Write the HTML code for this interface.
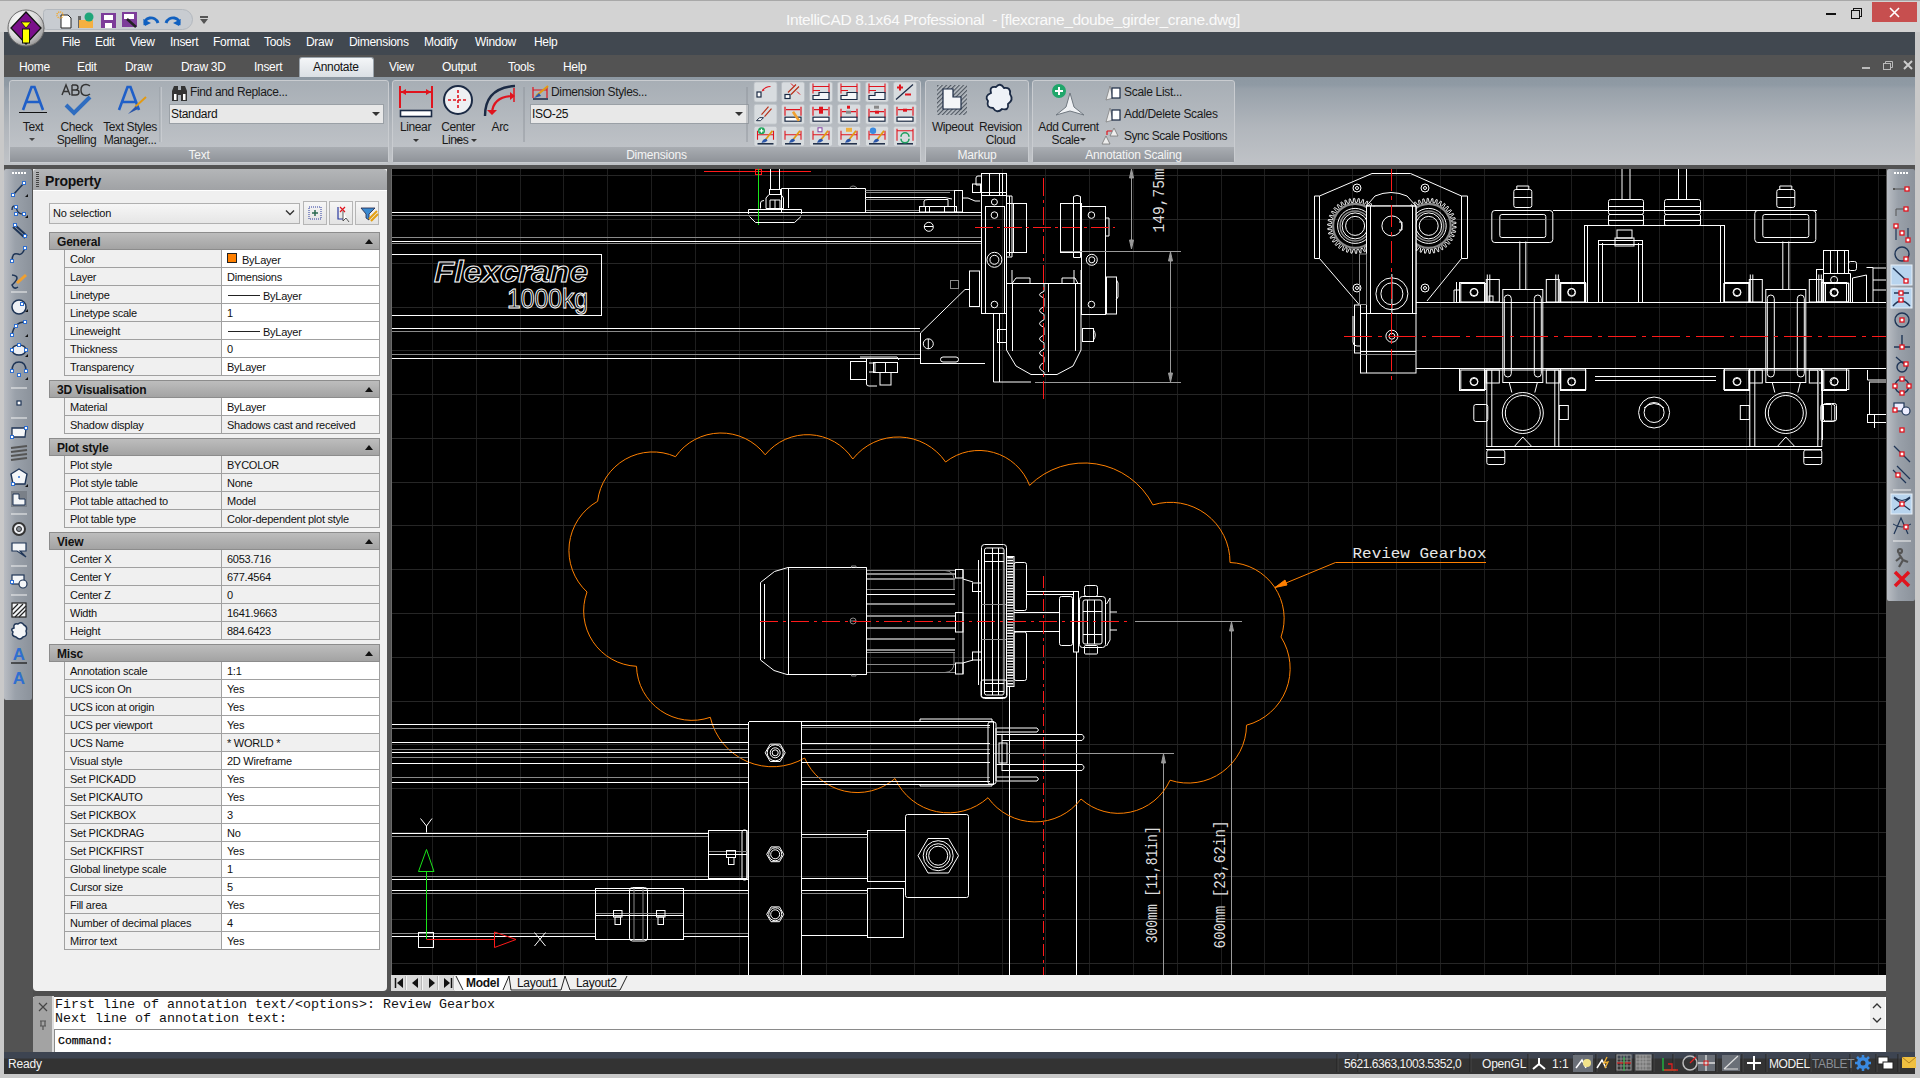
<!DOCTYPE html>
<html><head><meta charset="utf-8">
<style>
*{margin:0;padding:0;box-sizing:border-box}
html,body{width:1920px;height:1078px;overflow:hidden;background:#c9c9c9;font-family:"Liberation Sans",sans-serif;position:relative}
.a{position:absolute}
.t{position:absolute;white-space:pre;line-height:1}
#title{left:0;top:0;width:1920px;height:32px;background:#d3d3d3;border-top:1px solid #a8a8a8}
#menu{left:4px;top:32px;width:1911px;height:23px;background:#414850}
#menu .t{color:#fff;font-size:12px;top:4px;letter-spacing:-0.3px}
#tabs{left:4px;top:55px;width:1911px;height:22px;background:#535353}
#tabs .t{color:#fff;font-size:12px;top:6px;letter-spacing:-0.3px}
#ribbon{left:4px;top:77px;width:1911px;height:88px;background:linear-gradient(#8d98a2 0,#8f9aa4 8px,#98a1aa 12px,#b1b6bc 50px,#c0c3c7 88px)}
.panel{position:absolute;top:3px;height:83px;border:1px solid #c9ccd0;border-radius:3px;background:linear-gradient(#a7aeb5,#bcc0c5 60px,#c3c6ca)}
.plabel{position:absolute;left:0;right:0;bottom:0;height:15px;background:linear-gradient(#a9adb2,#8f9399);color:#f4f4f4;font-size:12px;text-align:center;line-height:17px;letter-spacing:-0.2px}
.rt{position:absolute;white-space:pre;font-size:12px;color:#1a1a1a;line-height:13px;text-align:center}
#main{left:4px;top:165px;width:1911px;height:887px;background:#535353}
#ltool{left:4px;top:169px;width:28px;height:531px;background:linear-gradient(90deg,#b9bdc3,#9aa1aa 40%,#8b929b);border-radius:2px}
#prop{left:33px;top:169px;width:354px;height:822px;background:#f0f0f0;border-radius:0 0 4px 4px}
#phead{left:33px;top:169px;width:354px;height:22px;background:linear-gradient(#b4b6b8,#9fa1a4);border-radius:4px 4px 0 0}
.sec{position:absolute;left:49px;width:331px;height:18px;background:linear-gradient(#bdbdbd,#a3a3a3);border:1px solid #8c8c8c;font-weight:bold;font-size:12px;color:#111}
.sec span{position:absolute;left:7px;top:2px;letter-spacing:-0.2px}
.sec i{position:absolute;right:6px;top:6px;width:0;height:0;border-left:4px solid transparent;border-right:4px solid transparent;border-bottom:5px solid #111}
.row{position:absolute;left:64px;width:316px;height:18px;border:1px solid #a0a0a0;border-top:none;font-size:11px;color:#111;letter-spacing:-0.25px}
.row .n{position:absolute;left:0;top:0;width:157px;height:17px;background:#f0f0f0;border-right:1px solid #a0a0a0}
.row .n span,.row .v span{position:absolute;left:5px;top:3px;white-space:pre}
.row .v{position:absolute;left:157px;top:0;width:157px;height:17px;background:#fff}
.row .v.g{background:#f0f0f0}
#draw{left:391px;top:169px;width:1495px;height:806px;background:#000;overflow:hidden}
#rtool{left:1887px;top:169px;width:28px;height:432px;background:linear-gradient(90deg,#b9bdc3,#9aa1aa 40%,#8b929b);border-radius:2px}
#ltabs{left:391px;top:975px;width:1495px;height:16px;background:#f0f0f0}
#cmd{left:33px;top:997px;width:1853px;height:55px;background:#fff}
#status{left:4px;top:1052px;width:1911px;height:22px;background:linear-gradient(#3d4451 0,#3d4451 6px,#333 7px,#333)}
</style></head><body>
<div id="title" class="a">

<div class="a" style="left:43px;top:8px;width:150px;height:21px;background:#c8ccd1;border:1px solid #b3b8be;border-radius:4px 12px 12px 4px"></div>
<svg class="a" style="left:55px;top:10px" width="135" height="18" viewBox="0 0 135 18">
<path d="M6 4 H13 L16 7 V17 H6 Z" fill="#fff" stroke="#222" stroke-width="1"/>
<circle cx="5" cy="4" r="3" fill="none" stroke="#f5a623" stroke-width="1.5" stroke-dasharray="1 1"/>
<rect x="23" y="5" width="3" height="12" fill="#666"/><path d="M24 9 H38 V17 H24 Z" fill="#f5b040"/>
<circle cx="34" cy="6" r="4.5" fill="#1fa67a"/>
<rect x="46" y="2" width="15" height="15" fill="#7d3d9a"/><rect x="49" y="4" width="9" height="5" fill="#fff"/><rect x="50" y="12" width="7" height="5" fill="#fff"/>
<rect x="67" y="1" width="15" height="15" fill="#7d3d9a"/><rect x="69" y="3" width="10" height="5" fill="#fff"/><path d="M72 8 L81 16" stroke="#222" stroke-width="2.5"/>
<path d="M90 14 C 88 6, 100 4, 103 12" fill="none" stroke="#1060c0" stroke-width="3"/><path d="M88 8 L90 15 L96 12 Z" fill="#1060c0"/>
<path d="M124 14 C 126 6, 114 4, 111 12" fill="none" stroke="#1060c0" stroke-width="3"/><path d="M126 8 L124 15 L118 12 Z" fill="#1060c0"/>
</svg>
<div class="a" style="left:200px;top:15px;width:8px;height:2px;background:#555"></div>
<div class="a" style="left:200px;top:18px;width:0;height:0;border-left:4px solid transparent;border-right:4px solid transparent;border-top:5px solid #555"></div>
<div class="t" style="left:786px;top:11px;font-size:15.5px;color:#fafafa;letter-spacing:-0.37px">IntelliCAD 8.1x64 Professional  - [flexcrane_doube_girder_crane.dwg]</div>
<div class="a" style="left:1826px;top:12px;width:10px;height:2px;background:#111"></div>
<div class="a" style="left:1853px;top:7px;width:9px;height:9px;border:1px solid #111"></div>
<div class="a" style="left:1851px;top:9px;width:9px;height:9px;border:1px solid #111;background:#d3d3d3"></div>
<div class="a" style="left:1872px;top:1px;width:45px;height:20px;background:#c74f4f"></div>
<svg class="a" style="left:1889px;top:6px" width="11" height="11"><path d="M1 1 L10 10 M10 1 L1 10" stroke="#fff" stroke-width="1.6"/></svg>
</div>
<div id="menu" class="a"><div class="t" style="left:58px">File</div><div class="t" style="left:91px">Edit</div><div class="t" style="left:126px">View</div><div class="t" style="left:166px">Insert</div><div class="t" style="left:209px">Format</div><div class="t" style="left:260px">Tools</div><div class="t" style="left:302px">Draw</div><div class="t" style="left:345px">Dimensions</div><div class="t" style="left:420px">Modify</div><div class="t" style="left:471px">Window</div><div class="t" style="left:530px">Help</div></div>
<div id="tabs" class="a"><div class="t" style="left:15px">Home</div><div class="t" style="left:73px">Edit</div><div class="t" style="left:121px">Draw</div><div class="t" style="left:177px">Draw 3D</div><div class="t" style="left:250px">Insert</div><div class="t" style="left:385px">View</div><div class="t" style="left:438px">Output</div><div class="t" style="left:504px">Tools</div><div class="t" style="left:559px">Help</div><div class="a" style="left:295px;top:2px;width:75px;height:21px;background:linear-gradient(#f4f6f8,#d9dee3);border:1px solid #9aa3ab;border-bottom:none;border-radius:3px 3px 0 0"></div><div class="t" style="left:309px;color:#111">Annotate</div><div class="a" style="left:1858px;top:12px;width:8px;height:2px;background:#bbb"></div><svg class="a" style="left:1879px;top:6px" width="10" height="9"><rect x="0.5" y="2.5" width="7" height="6" fill="none" stroke="#bbb"/><path d="M2.5 2.5 V0.5 H9.5 V6.5 H7.5" fill="none" stroke="#bbb"/></svg><svg class="a" style="left:1899px;top:5px" width="10" height="10"><path d="M1 1 L9 9 M9 1 L1 9" stroke="#ccc" stroke-width="2"/></svg></div>
<svg class="a" style="left:6px;top:8px;z-index:5" width="42" height="42" viewBox="0 0 42 42">
<defs><radialGradient id="lg" cx="0.35" cy="0.3" r="0.8"><stop offset="0" stop-color="#fff"/><stop offset="0.6" stop-color="#d8d8d8"/><stop offset="1" stop-color="#8a8a8a"/></radialGradient></defs>
<circle cx="20" cy="20" r="18" fill="url(#lg)" stroke="#6a6a6a" stroke-width="1"/>
<path d="M20 4 L35 20 L20 36 L5 20 Z" fill="#7a0f8a" stroke="#111" stroke-width="1.3"/>
<path d="M15 14 H25 L20 20 Z" fill="#ffff00" stroke="#111" stroke-width="0.8"/>
<rect x="16.5" y="21" width="7" height="14" fill="#ffff00" stroke="#111" stroke-width="1"/>
</svg>
<div id="ribbon" class="a"><div class="panel" style="left:5px;width:380px"><div class="plabel">Text</div></div>
<div class="panel" style="left:388px;width:529px"><div class="plabel">Dimensions</div></div>
<div class="panel" style="left:921px;width:104px"><div class="plabel">Markup</div></div>
<div class="panel" style="left:1028px;width:203px"><div class="plabel">Annotation Scaling</div></div>
<svg class="a" style="left:5px;top:5px" width="160" height="70" viewBox="9 82 160 70"><path d="M23 110 L31.5 87 L34.5 87 L43 110 M26 102 H40" fill="none" stroke="#1f5fc8" stroke-width="2.6"/><path d="M19 112.5 H47" stroke="#111" stroke-width="1"/><path d="M62 95 L66 85 L70 95 M63.5 91.5 H68.5 M72 85 V95 H76 Q79 95 79 92 Q79 90 76 90 H72 M72 90 H75.5 Q78 90 78 87.5 Q78 85 75.5 85 H72 M90 86 Q88 84.5 86 84.5 Q81 84.5 81 90 Q81 95.5 86 95.5 Q88 95.5 90 94" fill="none" stroke="#333" stroke-width="1.4"/><path d="M66 105 L74 113 L90 97" fill="none" stroke="#2f6dc0" stroke-width="4"/><path d="M119 110 L127.5 87 L130.5 87 L139 110 M122 102 H136" fill="none" stroke="#1f5fc8" stroke-width="2.6"/><path d="M135 107 L146 97" stroke="#e39a12" stroke-width="2"/><path d="M128 114 L136 106 L138 109 Z" fill="#2a55a8"/><path d="M161 87 V142" stroke="#d5d8dc" stroke-width="1"/><path d="M160 87 V142" stroke="#8a9097" stroke-width="0.6"/><path d="M29 138 h6 l-3 3 z" fill="#444"/></svg>
<div class="rt" style="left:-11px;top:44px;width:80px;line-height:13px;letter-spacing:-0.4px">Text</div>
<div class="rt" style="left:32.5px;top:44px;width:80px;line-height:13px;letter-spacing:-0.4px">Check<br>Spelling</div>
<div class="rt" style="left:86px;top:44px;width:80px;line-height:13px;letter-spacing:-0.4px">Text Styles<br>Manager...</div>
<svg class="a" style="left:167px;top:7px" width="18" height="18" viewBox="0 0 18 18"><path d="M1 17 V7 L3 2 H7 V17 Z M10 17 V2 H14 L16 7 V17 Z" fill="#333"/><rect x="7" y="6" width="3" height="5" fill="#333"/><rect x="3" y="10" width="2.5" height="6" fill="#fff"/><rect x="12" y="10" width="2.5" height="6" fill="#fff"/></svg>
<div class="rt" style="left:186px;top:9px;letter-spacing:-0.35px">Find and Replace...</div>
<div class="a" style="left:165px;top:27px;width:215px;height:20px;background:#e8e8e8;border:1px solid #9aa0a6"></div>
<div class="rt" style="left:167px;top:31px;letter-spacing:-0.3px;color:#111">Standard</div>
<div class="a" style="left:368px;top:35px;width:0;height:0;border-left:4px solid transparent;border-right:4px solid transparent;border-top:4px solid #333"></div>
<svg class="a" style="left:-4px;top:0px;z-index:1" width="1250" height="88" viewBox="0 77 1250 88"><path d="M400 86 V108 M432 86 V108 M401 92 H431" stroke="#e0141e" stroke-width="2" fill="none"/><path d="M401 92 l5 -3 v6 z M431 92 l-5 -3 v6 z" fill="#e0141e"/><rect x="400.5" y="110.5" width="31" height="6" fill="#fff" stroke="#1b2a44" stroke-width="1.6"/><path d="M413 139 h6 l-3 3 z" fill="#333"/><path d="M455 139 h6 l-3 3 z" fill="#333"/><path d="M471 139 h6 l-3 3 z" fill="#333"/><circle cx="458" cy="100" r="14" fill="#eef0f3" stroke="#1b2a44" stroke-width="2"/><path d="M448 100 H468 M458 90 V110" stroke="#e0141e" stroke-width="1.6" stroke-dasharray="3 2"/><path d="M485 116 Q485 88 515 86" fill="none" stroke="#1b2a44" stroke-width="2.4"/><path d="M492 113 Q493 97 512 96" fill="none" stroke="#e0141e" stroke-width="2.2"/><path d="M487 110 h10 l-5 5z M510 92 v8 l5 -4z" fill="#e0141e"/><path d="M514 88 V102" stroke="#e0141e" stroke-width="1.5"/><path d="M524 87 V142 M747 87 V142" stroke="#8a9097" stroke-width="0.8"/><path d="M533 87 V98 M547 87 V98 M533 90 H547" stroke="#e0141e" stroke-width="1.2" fill="none"/><path d="M533 99 H548" stroke="#1b2a44" stroke-width="1.5"/><path d="M536 96 L548 86" stroke="#e39a12" stroke-width="2"/><path d="M534 98 L539 93 L541 96Z" fill="#2a55a8"/><rect x="754.0" y="82.0" width="23" height="20" rx="2" fill="#d8dcdf" stroke="#b9bec3" stroke-width="0.8"/><rect x="754.0" y="104.2" width="23" height="20" rx="2" fill="#d8dcdf" stroke="#b9bec3" stroke-width="0.8"/><rect x="754.0" y="126.3" width="23" height="20" rx="2" fill="#d8dcdf" stroke="#b9bec3" stroke-width="0.8"/><rect x="781.5" y="82.0" width="23" height="20" rx="2" fill="#d8dcdf" stroke="#b9bec3" stroke-width="0.8"/><rect x="781.5" y="104.2" width="23" height="20" rx="2" fill="#d8dcdf" stroke="#b9bec3" stroke-width="0.8"/><rect x="781.5" y="126.3" width="23" height="20" rx="2" fill="#d8dcdf" stroke="#b9bec3" stroke-width="0.8"/><rect x="809.5" y="82.0" width="23" height="20" rx="2" fill="#d8dcdf" stroke="#b9bec3" stroke-width="0.8"/><rect x="809.5" y="104.2" width="23" height="20" rx="2" fill="#d8dcdf" stroke="#b9bec3" stroke-width="0.8"/><rect x="809.5" y="126.3" width="23" height="20" rx="2" fill="#d8dcdf" stroke="#b9bec3" stroke-width="0.8"/><rect x="837.5" y="82.0" width="23" height="20" rx="2" fill="#d8dcdf" stroke="#b9bec3" stroke-width="0.8"/><rect x="837.5" y="104.2" width="23" height="20" rx="2" fill="#d8dcdf" stroke="#b9bec3" stroke-width="0.8"/><rect x="837.5" y="126.3" width="23" height="20" rx="2" fill="#d8dcdf" stroke="#b9bec3" stroke-width="0.8"/><rect x="865.5" y="82.0" width="23" height="20" rx="2" fill="#d8dcdf" stroke="#b9bec3" stroke-width="0.8"/><rect x="865.5" y="104.2" width="23" height="20" rx="2" fill="#d8dcdf" stroke="#b9bec3" stroke-width="0.8"/><rect x="865.5" y="126.3" width="23" height="20" rx="2" fill="#d8dcdf" stroke="#b9bec3" stroke-width="0.8"/><rect x="893.5" y="82.0" width="23" height="20" rx="2" fill="#d8dcdf" stroke="#b9bec3" stroke-width="0.8"/><rect x="893.5" y="104.2" width="23" height="20" rx="2" fill="#d8dcdf" stroke="#b9bec3" stroke-width="0.8"/><rect x="893.5" y="126.3" width="23" height="20" rx="2" fill="#d8dcdf" stroke="#b9bec3" stroke-width="0.8"/><rect x="757.0" y="92.0" width="4" height="5" fill="#fff" stroke="#1b2a44" stroke-width="1.2"/><path d="M762.5 90.5 Q765.5 86.5 770.5 86.5" fill="none" stroke="#e0141e" stroke-width="1.2"/><path d="M761.5 91.5 l3 -1 l-1 -2z" fill="#e0141e"/><rect x="785" y="94.5" width="5" height="4" fill="#fff" stroke="#1b2a44" stroke-width="1.2"/><path d="M788 92.5 L796 84.5 M791 94.5 L799 86.5" stroke="#b83018" stroke-width="1.2"/><path d="M791 83.5 l3 3 M797 91.5 l3 3" stroke="#e0141e" stroke-width="1"/><path d="M813 83.5 V93.5 M829 83.5 V93.5 M813 86.5 H829 M813 90.5 H820" stroke="#e0141e" stroke-width="1.1" fill="none"/><path d="M813 99.5 V95.5 H819 V92.5 H829 V99.5 Z" fill="#f4f6f8" stroke="#1b2a44" stroke-width="1.2"/><path d="M841 83.5 V93.5 M857 83.5 V93.5 M841 86.5 H857 M841 90.5 H848" stroke="#e0141e" stroke-width="1.1" fill="none"/><path d="M841 99.5 V95.5 H847 V92.5 H857 V99.5 Z" fill="#f4f6f8" stroke="#1b2a44" stroke-width="1.2"/><path d="M869 83.5 V93.5 M885 83.5 V93.5 M869 86.5 H885 M869 90.5 H876" stroke="#e0141e" stroke-width="1.1" fill="none"/><path d="M869 99.5 V95.5 H875 V92.5 H885 V99.5 Z" fill="#f4f6f8" stroke="#1b2a44" stroke-width="1.2"/><path d="M896 99.5 L913 84.5" stroke="#1b2a44" stroke-width="1.2"/><path d="M897 87.5 h6 M900 84.5 v6 M905 94.5 h6" stroke="#e0141e" stroke-width="2"/><path d="M761.5 114.7 L768.5 106.7 M764.5 116.7 L771.5 108.7" stroke="#b83018" stroke-width="1.2"/><path d="M756.5 120.7 L759.5 117.7 H763.5 L760.5 120.7Z" fill="#fff" stroke="#1b2a44" stroke-width="1"/><path d="M785 106.7 V115.7 M801 106.7 V115.7 M786 109.7 H800" stroke="#e0141e" stroke-width="1.2" fill="none"/><rect x="785" y="117.2" width="16" height="4" fill="#fff" stroke="#1b2a44" stroke-width="1.2"/><path d="M793 111.7 L799 120.7" stroke="#f0a030" stroke-width="2.6"/><path d="M813 106.7 V115.7 M829 106.7 V115.7 M814 109.7 H828" stroke="#e0141e" stroke-width="1.2" fill="none"/><rect x="813" y="117.2" width="16" height="4" fill="#fff" stroke="#1b2a44" stroke-width="1.2"/><rect x="819" y="106.7" width="4" height="7" fill="#e0141e"/><path d="M841 108.7 V117.7 M857 108.7 V117.7 M842 111.7 H856" stroke="#e0141e" stroke-width="1.2" fill="none"/><rect x="841" y="117.2" width="16" height="4" fill="#fff" stroke="#1b2a44" stroke-width="1.2"/><rect x="847" y="105.7" width="3" height="3" fill="#e0141e"/><rect x="846" y="110.7" width="5" height="3" fill="#888"/><path d="M869 108.7 V117.7 M885 108.7 V117.7 M870 111.7 H884" stroke="#e0141e" stroke-width="1.2" fill="none"/><rect x="869" y="117.2" width="16" height="4" fill="#fff" stroke="#1b2a44" stroke-width="1.2"/><rect x="874" y="105.7" width="5" height="3" fill="#888"/><rect x="875" y="110.7" width="4" height="3" fill="#e0141e"/><path d="M897 106.7 V115.7 M913 106.7 V115.7 M898 109.7 H912" stroke="#e0141e" stroke-width="1.2" fill="none"/><rect x="897" y="117.2" width="16" height="4" fill="#fff" stroke="#1b2a44" stroke-width="1.2"/><rect x="903" y="108.7" width="4" height="3" fill="#e0141e"/><path d="M757.5 130.8 V139.8 M773.5 130.8 V139.8 M757.5 134.8 H773.5" stroke="#e0141e" stroke-width="1.1" fill="none"/><path d="M757.5 143.8 H773.5" stroke="#1b2a44" stroke-width="1.5"/><path d="M765.5 139.8 L772.5 130.8" stroke="#e39a12" stroke-width="1.8"/><path d="M761.5 142.8 Q763.5 137.8 766.5 138.8 L767.5 140.8 Q765.5 142.8 761.5 142.8Z" fill="#2a55a8"/><circle cx="761.5" cy="130.8" r="3.5" fill="#1fa65a"/><path d="M759.5 130.8 h4 M761.5 128.8 v4" stroke="#fff" stroke-width="1.2"/><path d="M785 130.8 V139.8 M801 130.8 V139.8 M785 134.8 H801" stroke="#e0141e" stroke-width="1.1" fill="none"/><path d="M785 143.8 H801" stroke="#1b2a44" stroke-width="1.5"/><path d="M793 139.8 L800 130.8" stroke="#e39a12" stroke-width="1.8"/><path d="M789 142.8 Q791 137.8 794 138.8 L795 140.8 Q793 142.8 789 142.8Z" fill="#2a55a8"/><path d="M813 130.8 V139.8 M829 130.8 V139.8 M813 134.8 H829" stroke="#e0141e" stroke-width="1.1" fill="none"/><path d="M813 143.8 H829" stroke="#1b2a44" stroke-width="1.5"/><path d="M821 139.8 L828 130.8" stroke="#e39a12" stroke-width="1.8"/><path d="M817 142.8 Q819 137.8 822 138.8 L823 140.8 Q821 142.8 817 142.8Z" fill="#2a55a8"/><rect x="818" y="127.8" width="4" height="4" fill="#fff" stroke="#8040a0" stroke-width="1"/><path d="M841 130.8 V139.8 M857 130.8 V139.8 M841 134.8 H857" stroke="#e0141e" stroke-width="1.1" fill="none"/><path d="M841 143.8 H857" stroke="#1b2a44" stroke-width="1.5"/><path d="M849 139.8 L856 130.8" stroke="#e39a12" stroke-width="1.8"/><path d="M845 142.8 Q847 137.8 850 138.8 L851 140.8 Q849 142.8 845 142.8Z" fill="#2a55a8"/><rect x="846" y="127.8" width="6" height="4" fill="#f0b040"/><path d="M869 130.8 V139.8 M885 130.8 V139.8 M869 134.8 H885" stroke="#e0141e" stroke-width="1.1" fill="none"/><path d="M869 143.8 H885" stroke="#1b2a44" stroke-width="1.5"/><path d="M877 139.8 L884 130.8" stroke="#e39a12" stroke-width="1.8"/><path d="M873 142.8 Q875 137.8 878 138.8 L879 140.8 Q877 142.8 873 142.8Z" fill="#2a55a8"/><circle cx="873" cy="130.8" r="3.2" fill="#3a8ae0"/><path d="M897 128.8 V140.8 M913 128.8 V140.8 M897 130.8 H913" stroke="#e0141e" stroke-width="1.1" fill="none"/><path d="M897 143.8 H913" stroke="#1b2a44" stroke-width="1.5"/><path d="M901 136.8 a4 4 0 0 1 8 0 M909 138.8 a4 4 0 0 1 -8 0" fill="none" stroke="#20a060" stroke-width="1.6"/><defs><pattern id="hp" width="3" height="3" patternUnits="userSpaceOnUse" patternTransform="rotate(45)"><rect width="3" height="3" fill="#b8bec4"/><rect width="1.2" height="3" fill="#505861"/></pattern></defs><rect x="937" y="85" width="30" height="30" fill="url(#hp)"/><path d="M943 89 H953 V97 H961 V109 H943 Z" fill="#f4f6f8" stroke="#1b2a44" stroke-width="1.2"/><path d="M991 93 Q989 86 996 87 Q1000 82 1004 88 Q1011 87 1010 94 Q1014 100 1008 104 Q1009 111 1002 109 Q997 114 993 108 Q986 108 988 101 Q984 96 991 93 Z" fill="#eef2f7" stroke="#1b2a44" stroke-width="1.8"/><circle cx="1059" cy="91" r="7" fill="#1fa66a"/><path d="M1055 91 h8 M1059 87 v8" stroke="#fff" stroke-width="2"/><path d="M1070 93 L1074 107 L1084 115 L1070 111 L1056 115 L1066 107 Z" fill="#f0f2f5" stroke="#707880" stroke-width="1"/><path d="M1106 100 L1110 86 L1113 98 Z" fill="#eee" stroke="#777" stroke-width="0.7"/><rect x="1112" y="88" width="8" height="10" fill="#fff" stroke="#1b2a44" stroke-width="1.2"/><path d="M1106 122 L1110 108 L1113 120 Z" fill="#eee" stroke="#777" stroke-width="0.7"/><rect x="1112" y="110" width="8" height="10" fill="#fff" stroke="#1b2a44" stroke-width="1.2"/><path d="M1107 131 H1112 M1107 131 V135" stroke="#e0141e" stroke-width="1.2"/><path d="M1114 128 L1118 136 L1110 136 Z M1106 136 L1110 144 L1102 144 Z" fill="#eee" stroke="#777" stroke-width="0.8"/><path d="M1080 138 h6 l-3 3 z" fill="#333"/></svg>
<div class="rt" style="left:371.5px;top:44px;width:80px;line-height:13px;letter-spacing:-0.4px">Linear</div>
<div class="rt" style="left:414px;top:44px;width:80px;line-height:13px;letter-spacing:-0.4px">Center<br>Lines&nbsp;&nbsp;</div>
<div class="rt" style="left:456px;top:44px;width:80px;line-height:13px;letter-spacing:-0.4px">Arc</div>
<div class="rt" style="left:547px;top:9px;letter-spacing:-0.35px">Dimension Styles...</div>
<div class="a" style="left:526px;top:27px;width:219px;height:20px;background:#e8e8e8;border:1px solid #9aa0a6"></div>
<div class="rt" style="left:528px;top:31px;letter-spacing:-0.3px;color:#111">ISO-25</div>
<div class="a" style="left:731px;top:35px;width:0;height:0;border-left:4px solid transparent;border-right:4px solid transparent;border-top:4px solid #333"></div>
<div class="rt" style="left:908.5px;top:44px;width:80px;line-height:13px;letter-spacing:-0.4px">Wipeout</div>
<div class="rt" style="left:956.5px;top:44px;width:80px;line-height:13px;letter-spacing:-0.4px">Revision<br>Cloud</div>
<div class="rt" style="left:1024.5px;top:44px;width:80px;line-height:13px;letter-spacing:-0.4px">Add Current<br>Scale&nbsp;&nbsp;</div>
<div class="rt" style="left:1120px;top:9px;letter-spacing:-0.3px">Scale List...</div>
<div class="rt" style="left:1120px;top:31px;letter-spacing:-0.3px">Add/Delete Scales</div>
<div class="rt" style="left:1120px;top:53px;letter-spacing:-0.45px">Sync Scale Positions</div>
</div>
<div id="main" class="a"></div>
<div id="ltool" class="a"></div>
<div id="prop" class="a"></div>
<div id="phead" class="a"></div>
<div class="a" style="left:36px;top:172px;width:3px;height:16px;background:repeating-linear-gradient(#444 0 1px,transparent 1px 2px);"></div>
<div class="t" style="left:45px;top:174px;font-size:14px;font-weight:bold;color:#111;letter-spacing:-0.2px">Property</div>
<div class="a" style="left:33px;top:190px;width:354px;height:1px;background:#fff"></div>
<div class="a" style="left:49px;top:203px;width:251px;height:21px;background:linear-gradient(#f6f6f6,#e6e6e6);border:1px solid #b0b0b0"></div>
<div class="t" style="left:53px;top:208px;font-size:11px;color:#111;letter-spacing:-0.2px">No selection</div>
<svg class="a" style="left:285px;top:209px" width="10" height="8"><path d="M1 1.5 L5 5.5 L9 1.5" fill="none" stroke="#333" stroke-width="1.4"/></svg>
<div class="a" style="left:303px;top:201px;width:24px;height:24px;background:linear-gradient(#f6f6f6,#e3e3e3);border:1px solid #b5b5b5"></div>
<div class="a" style="left:329px;top:201px;width:24px;height:24px;background:linear-gradient(#f6f6f6,#e3e3e3);border:1px solid #b5b5b5"></div>
<div class="a" style="left:355px;top:201px;width:24px;height:24px;background:linear-gradient(#f6f6f6,#e3e3e3);border:1px solid #b5b5b5"></div>
<svg class="a" style="left:303px;top:201px" width="80" height="24"><rect x="6" y="6" width="12" height="12" fill="none" stroke="#2a3aa0" stroke-dasharray="1 1"/><path d="M12 9 V15 M9 12 H15" stroke="#2a6a50" stroke-width="1.5"/><path d="M35 6 V18 H42" fill="none" stroke="#2a3aa0" stroke-width="1.2"/><path d="M37 6 L42 11 M42 6 L37 11" stroke="#e0141e" stroke-width="1.2"/><path d="M40 10 L40 20 L43 17 L46 21" fill="#fff" stroke="#333" stroke-width="0.8"/><path d="M58 7 H72 L66 13 V19 L63 17 V13 Z" fill="#3a8ad0" stroke="#224" stroke-width="0.8"/><path d="M66 18 L74 10 M68 20 L75 13" stroke="#e3a012" stroke-width="2"/></svg>
<div class="sec" style="top:232px"><span>General</span><i></i></div>
<div class="row" style="top:250px"><div class="n"><span>Color</span></div><div class="v"><b style="position:absolute;left:5px;top:3px;width:10px;height:10px;background:#ff8000;border:1px solid #222"></b><span style="left:20px;top:4px">ByLayer</span></div></div>
<div class="row" style="top:268px"><div class="n"><span>Layer</span></div><div class="v"><span>Dimensions</span></div></div>
<div class="row" style="top:286px"><div class="n"><span>Linetype</span></div><div class="v"><b style="position:absolute;left:6px;top:9px;width:32px;height:1px;background:#222"></b><span style="left:41px;top:4px">ByLayer</span></div></div>
<div class="row" style="top:304px"><div class="n"><span>Linetype scale</span></div><div class="v"><span>1</span></div></div>
<div class="row" style="top:322px"><div class="n"><span>Lineweight</span></div><div class="v"><b style="position:absolute;left:6px;top:9px;width:32px;height:1px;background:#222"></b><span style="left:41px;top:4px">ByLayer</span></div></div>
<div class="row" style="top:340px"><div class="n"><span>Thickness</span></div><div class="v"><span>0</span></div></div>
<div class="row" style="top:358px"><div class="n"><span>Transparency</span></div><div class="v"><span>ByLayer</span></div></div>
<div class="sec" style="top:380px"><span>3D Visualisation</span><i></i></div>
<div class="row" style="top:398px"><div class="n"><span>Material</span></div><div class="v"><span>ByLayer</span></div></div>
<div class="row" style="top:416px"><div class="n"><span>Shadow display</span></div><div class="v g"><span>Shadows cast and received</span></div></div>
<div class="sec" style="top:438px"><span>Plot style</span><i></i></div>
<div class="row" style="top:456px"><div class="n"><span>Plot style</span></div><div class="v g"><span>BYCOLOR</span></div></div>
<div class="row" style="top:474px"><div class="n"><span>Plot style table</span></div><div class="v g"><span>None</span></div></div>
<div class="row" style="top:492px"><div class="n"><span>Plot table attached to</span></div><div class="v g"><span>Model</span></div></div>
<div class="row" style="top:510px"><div class="n"><span>Plot table type</span></div><div class="v g"><span>Color-dependent plot style</span></div></div>
<div class="sec" style="top:532px"><span>View</span><i></i></div>
<div class="row" style="top:550px"><div class="n"><span>Center X</span></div><div class="v g"><span>6053.716</span></div></div>
<div class="row" style="top:568px"><div class="n"><span>Center Y</span></div><div class="v g"><span>677.4564</span></div></div>
<div class="row" style="top:586px"><div class="n"><span>Center Z</span></div><div class="v g"><span>0</span></div></div>
<div class="row" style="top:604px"><div class="n"><span>Width</span></div><div class="v g"><span>1641.9663</span></div></div>
<div class="row" style="top:622px"><div class="n"><span>Height</span></div><div class="v g"><span>884.6423</span></div></div>
<div class="sec" style="top:644px"><span>Misc</span><i></i></div>
<div class="row" style="top:662px"><div class="n"><span>Annotation scale</span></div><div class="v"><span>1:1</span></div></div>
<div class="row" style="top:680px"><div class="n"><span>UCS icon On</span></div><div class="v"><span>Yes</span></div></div>
<div class="row" style="top:698px"><div class="n"><span>UCS icon at origin</span></div><div class="v"><span>Yes</span></div></div>
<div class="row" style="top:716px"><div class="n"><span>UCS per viewport</span></div><div class="v"><span>Yes</span></div></div>
<div class="row" style="top:734px"><div class="n"><span>UCS Name</span></div><div class="v g"><span>* WORLD *</span></div></div>
<div class="row" style="top:752px"><div class="n"><span>Visual style</span></div><div class="v"><span>2D Wireframe</span></div></div>
<div class="row" style="top:770px"><div class="n"><span>Set PICKADD</span></div><div class="v"><span>Yes</span></div></div>
<div class="row" style="top:788px"><div class="n"><span>Set PICKAUTO</span></div><div class="v"><span>Yes</span></div></div>
<div class="row" style="top:806px"><div class="n"><span>Set PICKBOX</span></div><div class="v"><span>3</span></div></div>
<div class="row" style="top:824px"><div class="n"><span>Set PICKDRAG</span></div><div class="v"><span>No</span></div></div>
<div class="row" style="top:842px"><div class="n"><span>Set PICKFIRST</span></div><div class="v"><span>Yes</span></div></div>
<div class="row" style="top:860px"><div class="n"><span>Global linetype scale</span></div><div class="v"><span>1</span></div></div>
<div class="row" style="top:878px"><div class="n"><span>Cursor size</span></div><div class="v"><span>5</span></div></div>
<div class="row" style="top:896px"><div class="n"><span>Fill area</span></div><div class="v"><span>Yes</span></div></div>
<div class="row" style="top:914px"><div class="n"><span>Number of decimal places</span></div><div class="v"><span>4</span></div></div>
<div class="row" style="top:932px"><div class="n"><span>Mirror text</span></div><div class="v"><span>Yes</span></div></div>
<div id="draw" class="a"><svg style="position:absolute;left:0;top:0" width="1495" height="806" viewBox="391 169 1495 806"><path d="M388.5 169V975 M432.5 169V975 M476.5 169V975 M520.5 169V975 M563.5 169V975 M607.5 169V975 M651.5 169V975 M695.5 169V975 M739.5 169V975 M783.5 169V975 M826.5 169V975 M870.5 169V975 M914.5 169V975 M958.5 169V975 M1002.5 169V975 M1045.5 169V975 M1089.5 169V975 M1133.5 169V975 M1177.5 169V975 M1221.5 169V975 M1264.5 169V975 M1308.5 169V975 M1352.5 169V975 M1396.5 169V975 M1440.5 169V975 M1484.5 169V975 M1527.5 169V975 M1571.5 169V975 M1615.5 169V975 M1659.5 169V975 M1703.5 169V975 M1746.5 169V975 M1790.5 169V975 M1834.5 169V975 M1878.5 169V975" stroke="#1e1e1e" stroke-width="1"/>
<path d="M391 175.5H1887 M391 219.5H1887 M391 263.5H1887 M391 307.5H1887 M391 350.5H1887 M391 394.5H1887 M391 438.5H1887 M391 482.5H1887 M391 525.5H1887 M391 569.5H1887 M391 613.5H1887 M391 657.5H1887 M391 701.5H1887 M391 744.5H1887 M391 788.5H1887 M391 832.5H1887 M391 876.5H1887 M391 919.5H1887 M391 963.5H1887" stroke="#262626" stroke-width="1"/>
<g shape-rendering="crispEdges">
<path d="M391 212.5H981" stroke="#ffffff" stroke-width="1"/>
<path d="M391 215.5H981" stroke="#8a8a8a" stroke-width="1"/>
<path d="M391 237.5H981" stroke="#8a8a8a" stroke-width="1"/>
<path d="M391 241.5H981" stroke="#ffffff" stroke-width="1"/>
<path d="M391 243.5H981" stroke="#8a8a8a" stroke-width="1"/>
<path d="M391 254.5H601.5V315.5H391" stroke="#ffffff" stroke-width="1" fill="none"/>
<path d="M391 328.5H920" stroke="#ffffff" stroke-width="1"/>
<path d="M391 331.5H920" stroke="#8a8a8a" stroke-width="1"/>
<path d="M391 354.5H920" stroke="#8a8a8a" stroke-width="1"/>
<path d="M391 358.5H920" stroke="#ffffff" stroke-width="1"/>
</g>
<text x="434" y="282" font-family="Liberation Sans" font-weight="bold" font-style="italic" font-size="30" fill="none" stroke="#fff" stroke-width="1" textLength="154" lengthAdjust="spacingAndGlyphs">Flexcrane</text>
<text x="507" y="308" font-family="Liberation Sans" font-size="28" fill="none" stroke="#fff" stroke-width="1" textLength="81" lengthAdjust="spacingAndGlyphs">1000kg</text>
<path d="M704 171.5H811" stroke="#ff1a1a" stroke-width="1"/>
<rect x="755.5" y="169.5" width="6" height="5" stroke="#ff1a1a" stroke-width="1" fill="none"/>
<path d="M758.5 169V225" stroke="#19e619" stroke-width="1"/>
<path d="M770.5 169V189" stroke="#ffffff" stroke-width="1"/>
<path d="M779.5 169V189" stroke="#ffffff" stroke-width="1"/>
<rect x="769.5" y="189.5" width="11" height="5" stroke="#ffffff" stroke-width="1" fill="none"/>
<path d="M766 208.5V198L769 194.5H781L783.5 198V208.5Z" stroke="#ffffff" stroke-width="1" fill="none"/>
<path d="M770 208.5V200H775V208.5M775 200H780V208.5" stroke="#ffffff" stroke-width="1" fill="none"/>
<path d="M760.5 208.5V203Q760.5 200.5 764 200.5" stroke="#ffffff" stroke-width="1" fill="none"/>
<path d="M748.5 209.5H801.5V214M748.5 209.5V214M749.5 216.5L755.5 222.5H794.5L801 216.5" stroke="#ffffff" stroke-width="1" fill="none"/>
<path d="M781.5 212V188.5H865.5V212M788.5 188.5V208" stroke="#ffffff" stroke-width="1" fill="none"/>
<path d="M849.5 188Q853 184 857 188" stroke="#8a8a8a" stroke-width="1" fill="none"/>
<path d="M865.5 190.5H954.5M865.5 192.5H950" stroke="#8a8a8a" stroke-width="1" fill="none"/>
<path d="M865.5 197.5H945L952 199" stroke="#ffffff" stroke-width="1" fill="none"/>
<path d="M865.5 199.5H948" stroke="#8a8a8a" stroke-width="1" fill="none"/>
<path d="M866 210.5H919" stroke="#8a8a8a" stroke-width="1" fill="none"/>
<rect x="954.5" y="190.5" width="8" height="21.5" stroke="#ffffff" stroke-width="1" fill="none"/>
<rect x="919.5" y="206.5" width="37" height="5.5" stroke="#ffffff" stroke-width="1" fill="none"/>
<path d="M924 206.5V201Q925 199.5 928 199.5H948V206.5" stroke="#ffffff" stroke-width="1" fill="none"/>
<path d="M925.5 206.5V212" stroke="#ffffff" stroke-width="1"/>
<path d="M929.5 206.5V212" stroke="#ffffff" stroke-width="1"/>
<path d="M944.5 206.5V212" stroke="#ffffff" stroke-width="1"/>
<path d="M962.5 198H968L975 201H980" stroke="#ffffff" stroke-width="1" fill="none"/>
<circle cx="928.8" cy="226.8" r="4.5" stroke="#ffffff" stroke-width="1" fill="none"/>
<path d="M924 226.5H933" stroke="#ffffff" stroke-width="1"/>
<rect x="972.5" y="184" width="8" height="8.5" stroke="#ffffff" stroke-width="1" fill="none"/>
<path d="M920.5 333L965 289.5H970" stroke="#ffffff" stroke-width="1" fill="none"/>
<path d="M920.5 333V363.5" stroke="#ffffff" stroke-width="1"/>
<path d="M920 363.5H985" stroke="#ffffff" stroke-width="1"/>
<circle cx="928.3" cy="343.8" r="5" stroke="#ffffff" stroke-width="1" fill="none"/>
<path d="M928.3 339V349" stroke="#ffffff" stroke-width="1"/>
<rect x="940.5" y="357" width="18" height="5" rx="2.5" stroke="#ffffff" stroke-width="1" fill="none"/>
<rect x="950.5" y="280.5" width="8" height="8" stroke="#8a8a8a" stroke-width="1" fill="none"/>
<rect x="850.5" y="361.5" width="16" height="18" stroke="#ffffff" stroke-width="1" fill="none"/>
<path d="M866.5 358V384Q866.5 386 869 386H877M869 363H875V372H869" stroke="#ffffff" stroke-width="1" fill="none"/>
<rect x="873.5" y="362.5" width="24" height="10" stroke="#ffffff" stroke-width="1" fill="none"/>
<rect x="880" y="372.5" width="11" height="12.5" stroke="#ffffff" stroke-width="1" fill="none"/>
<path d="M885.5 362.5V372.5" stroke="#ffffff" stroke-width="1"/>
<path d="M860 357H897L899 360" stroke="#ffffff" stroke-width="1" fill="none"/>
<rect x="981.5" y="173.5" width="25" height="22" stroke="#ffffff" stroke-width="1" fill="none"/>
<path d="M989.5 173.5V195.5" stroke="#ffffff" stroke-width="1"/>
<path d="M999.5 173.5V195.5" stroke="#ffffff" stroke-width="1"/>
<path d="M1002.5 173.5V195.5" stroke="#ffffff" stroke-width="1"/>
<path d="M981.5 192.5H1006.5" stroke="#ffffff" stroke-width="1"/>
<path d="M976 185V178Q976 176 978 176H981.5M976 185H981.5" stroke="#ffffff" stroke-width="1" fill="none"/>
<rect x="981.5" y="195.5" width="25" height="118" stroke="#ffffff" stroke-width="1" fill="none"/>
<rect x="985.5" y="206.5" width="19" height="107" stroke="#ffffff" stroke-width="1" fill="none"/>
<circle cx="994.4" cy="215.1" r="3.3" stroke="#ffffff" stroke-width="1" fill="none"/>
<circle cx="994.4" cy="304.5" r="3.3" stroke="#ffffff" stroke-width="1" fill="none"/>
<circle cx="994.4" cy="259.8" r="7.5" stroke="#ffffff" stroke-width="1" fill="none"/>
<circle cx="994.4" cy="259.8" r="4.5" stroke="#ffffff" stroke-width="1" fill="none"/>
<circle cx="994.4" cy="202" r="3" stroke="#ffffff" stroke-width="1" fill="none"/>
<rect x="1006.5" y="203.5" width="20" height="49" stroke="#ffffff" stroke-width="1" fill="none"/>
<path d="M1013.5 203.5V252.5" stroke="#ffffff" stroke-width="1"/>
<path d="M1009.5 196V256" stroke="#ffffff" stroke-width="1"/>
<path d="M1006.5 196H1012V257H1006.5" stroke="#ffffff" stroke-width="1" fill="none"/>
<rect x="1081.5" y="206.5" width="24" height="108" stroke="#ffffff" stroke-width="1" fill="none"/>
<circle cx="1091.4" cy="215.1" r="3.3" stroke="#ffffff" stroke-width="1" fill="none"/>
<circle cx="1091.4" cy="304.5" r="3.3" stroke="#ffffff" stroke-width="1" fill="none"/>
<circle cx="1091.8" cy="259.8" r="5.5" stroke="#ffffff" stroke-width="1" fill="none"/>
<circle cx="1091.8" cy="259.8" r="3" stroke="#ffffff" stroke-width="1" fill="none"/>
<rect x="1060.5" y="203.5" width="21" height="49" stroke="#ffffff" stroke-width="1" fill="none"/>
<path d="M1073.5 196.5V257.5H1080.5V196.5Q1077 194 1073.5 196.5" stroke="#ffffff" stroke-width="1" fill="none"/>
<path d="M1105.5 218H1109V236H1105.5" stroke="#ffffff" stroke-width="1" fill="none"/>
<path d="M1006.5 283.5H1081V350L1073 366L1057 374.5H1031L1016 366L1006.5 350Z" stroke="#ffffff" stroke-width="1" fill="none"/>
<path d="M1012.5 283.5V351" stroke="#ffffff" stroke-width="1"/>
<path d="M1075.5 283.5V351" stroke="#ffffff" stroke-width="1"/>
<path d="M1006.5 270V283.5M1012 270V283.5M1074 270V283.5M1081 270V283.5" stroke="#ffffff" stroke-width="1" fill="none"/>
<path d="M1012 283.5L1016 278H1030L1030 283.5M1062 283.5V278H1075L1078 283.5" stroke="#ffffff" stroke-width="1" fill="none"/>
<path d="M1044 283.5 V291.4 Q1035 294.7 1044 298.0 V306.7 Q1035 310.5 1044 314.3 V319.8 Q1035 323.6 1044 327.4 V335.0 Q1035 338.9 1044 342.7 V349.2 Q1035 353.0 1044 356.8 V362.3 Q1035 367.1 1044 372.0 V374" stroke="#ffffff" stroke-width="1" fill="none"/>
<path d="M1048.5 283.5V372" stroke="#ffffff" stroke-width="1"/>
<path d="M993.5 313.5V382" stroke="#ffffff" stroke-width="1"/>
<path d="M999.5 313.5V382" stroke="#ffffff" stroke-width="1"/>
<path d="M993.5 382H1031" stroke="#ffffff" stroke-width="1"/>
<rect x="997.5" y="329.5" width="9" height="13" stroke="#ffffff" stroke-width="1" fill="none"/>
<rect x="1082.5" y="328.5" width="11" height="13" stroke="#ffffff" stroke-width="1" fill="none"/>
<path d="M1093.5 330Q1097 335 1093.5 340" stroke="#ffffff" stroke-width="1" fill="none"/>
<rect x="969.5" y="271" width="10" height="35.5" stroke="#ffffff" stroke-width="1" fill="none"/>
<rect x="1106.5" y="277" width="10" height="37" stroke="#ffffff" stroke-width="1" fill="none"/>
<path d="M1116.5 280L1118 283V297L1116 300" stroke="#ffffff" stroke-width="1" fill="none"/>
<path d="M1061 251.5H1181" stroke="#9a9a9a" stroke-width="1"/>
<path d="M1035 382.5H1181" stroke="#9a9a9a" stroke-width="1"/>
<path d="M1131.5 169V249" stroke="#9a9a9a" stroke-width="1"/>
<path d="M1170.5 252V382" stroke="#9a9a9a" stroke-width="1"/>
<path d="M1131.5 249L1129.5 240H1133.5Z M1131.5 169L1129.5 178H1133.5Z" stroke="#9a9a9a" stroke-width="1" fill="#9a9a9a"/>
<path d="M1170.5 252L1168.5 261H1172.5Z M1170.5 382L1168.5 373H1172.5Z" stroke="#9a9a9a" stroke-width="1" fill="#9a9a9a"/>
<text x="1164" y="232.6" font-family="Liberation Mono" font-size="16" fill="#dcdcdc" text-anchor="start" transform="rotate(-90 1164 232.6)" textLength="70" lengthAdjust="spacingAndGlyphs">149,75mm</text>
<g shape-rendering="crispEdges">
<path d="M975 227.5H1115" stroke="#ff1a1a" stroke-width="1" stroke-dasharray="18 4 3 4"/>
<path d="M1043.5 178V400" stroke="#ff1a1a" stroke-width="1" stroke-dasharray="18 4 3 4"/>
</g>
<path d="M1314.5 196H1319.5V258.5H1314.5Z" stroke="#ffffff" stroke-width="1" fill="none"/>
<path d="M1461.5 196H1467.5V258.5H1461.5Z" stroke="#ffffff" stroke-width="1" fill="none"/>
<path d="M1319.5 196L1372 173.5H1410.5L1461.5 196" stroke="#ffffff" stroke-width="1" fill="none"/>
<path d="M1319.5 258.5L1359.5 305M1461.5 258.5L1427 301" stroke="#ffffff" stroke-width="1" fill="none"/>
<path d="M1378.6 225.9 L1382.6 226.7 L1382.5 227.8 L1378.5 228.2 L1378.3 229.8 L1382.1 231.2 L1381.8 232.3 L1377.8 232.0 L1377.3 233.5 L1380.8 235.6 L1380.4 236.6 L1376.5 235.7 L1375.8 237.1 L1378.9 239.7 L1378.3 240.6 L1374.6 239.1 L1373.6 240.3 L1376.3 243.4 L1375.6 244.3 L1372.1 242.1 L1371.0 243.2 L1373.1 246.7 L1372.3 247.4 L1369.2 244.7 L1368.0 245.6 L1369.4 249.4 L1368.5 249.9 L1365.9 246.7 L1364.5 247.4 L1365.4 251.4 L1364.4 251.8 L1362.4 248.2 L1360.9 248.7 L1361.1 252.7 L1360.0 253.0 L1358.6 249.1 L1357.0 249.3 L1356.6 253.4 L1355.5 253.4 L1354.7 249.4 L1353.2 249.3 L1352.0 253.2 L1350.9 253.1 L1350.8 249.0 L1349.3 248.7 L1347.6 252.3 L1346.5 252.0 L1347.1 248.0 L1345.7 247.4 L1343.3 250.7 L1342.3 250.3 L1343.6 246.4 L1342.2 245.6 L1339.4 248.5 L1338.5 247.8 L1340.4 244.2 L1339.2 243.2 L1335.9 245.6 L1335.1 244.8 L1337.5 241.5 L1336.6 240.3 L1332.9 242.1 L1332.3 241.2 L1335.2 238.4 L1334.4 237.1 L1330.5 238.3 L1330.1 237.3 L1333.4 235.0 L1332.9 233.5 L1328.8 234.1 L1328.5 233.0 L1332.2 231.3 L1331.9 229.8 L1327.9 229.6 L1327.7 228.5 L1331.7 227.5 L1331.6 225.9 L1327.6 225.1 L1327.7 224.0 L1331.7 223.6 L1331.9 222.0 L1328.1 220.6 L1328.4 219.5 L1332.4 219.8 L1332.9 218.3 L1329.4 216.2 L1329.8 215.2 L1333.7 216.1 L1334.4 214.7 L1331.3 212.1 L1331.9 211.2 L1335.6 212.7 L1336.6 211.5 L1333.9 208.4 L1334.6 207.5 L1338.1 209.7 L1339.2 208.6 L1337.1 205.1 L1337.9 204.4 L1341.0 207.1 L1342.2 206.2 L1340.8 202.4 L1341.7 201.9 L1344.3 205.1 L1345.7 204.4 L1344.8 200.4 L1345.8 200.0 L1347.8 203.6 L1349.3 203.1 L1349.1 199.1 L1350.2 198.8 L1351.6 202.7 L1353.2 202.5 L1353.6 198.4 L1354.7 198.4 L1355.5 202.4 L1357.0 202.5 L1358.2 198.6 L1359.3 198.7 L1359.4 202.8 L1360.9 203.1 L1362.6 199.5 L1363.7 199.8 L1363.1 203.8 L1364.5 204.4 L1366.9 201.1 L1367.9 201.5 L1366.6 205.4 L1368.0 206.2 L1370.8 203.3 L1371.7 204.0 L1369.8 207.6 L1371.0 208.6 L1374.3 206.2 L1375.1 207.0 L1372.7 210.3 L1373.6 211.5 L1377.3 209.7 L1377.9 210.6 L1375.0 213.4 L1375.8 214.7 L1379.7 213.5 L1380.1 214.5 L1376.8 216.8 L1377.3 218.3 L1381.4 217.7 L1381.7 218.8 L1378.0 220.5 L1378.3 222.0 L1382.3 222.2 L1382.5 223.3 L1378.5 224.3Z" stroke="#ffffff" stroke-width="0.9" fill="none"/>
<circle cx="1355.1" cy="225.9" r="22" stroke="#8a8a8a" stroke-width="2.2" fill="none"/>
<circle cx="1355.1" cy="225.9" r="17.5" stroke="#ffffff" stroke-width="1" fill="none"/>
<circle cx="1355.1" cy="225.9" r="15" stroke="#8a8a8a" stroke-width="1.5" fill="none"/>
<circle cx="1355.1" cy="225.9" r="13" stroke="#ffffff" stroke-width="1" fill="none"/>
<circle cx="1355.1" cy="225.9" r="9.5" stroke="#ffffff" stroke-width="1" fill="none"/>
<path d="M1452.2 225.9 L1456.2 226.7 L1456.1 227.8 L1452.1 228.2 L1451.9 229.8 L1455.7 231.2 L1455.4 232.3 L1451.4 232.0 L1450.9 233.5 L1454.4 235.6 L1454.0 236.6 L1450.1 235.7 L1449.4 237.1 L1452.5 239.7 L1451.9 240.6 L1448.2 239.1 L1447.2 240.3 L1449.9 243.4 L1449.2 244.3 L1445.7 242.1 L1444.6 243.2 L1446.7 246.7 L1445.9 247.4 L1442.8 244.7 L1441.6 245.6 L1443.0 249.4 L1442.1 249.9 L1439.5 246.7 L1438.1 247.4 L1439.0 251.4 L1438.0 251.8 L1436.0 248.2 L1434.5 248.7 L1434.7 252.7 L1433.6 253.0 L1432.2 249.1 L1430.6 249.3 L1430.2 253.4 L1429.1 253.4 L1428.3 249.4 L1426.8 249.3 L1425.6 253.2 L1424.5 253.1 L1424.4 249.0 L1422.9 248.7 L1421.2 252.3 L1420.1 252.0 L1420.7 248.0 L1419.3 247.4 L1416.9 250.7 L1415.9 250.3 L1417.2 246.4 L1415.8 245.6 L1413.0 248.5 L1412.1 247.8 L1414.0 244.2 L1412.8 243.2 L1409.5 245.6 L1408.7 244.8 L1411.1 241.5 L1410.2 240.3 L1406.5 242.1 L1405.9 241.2 L1408.8 238.4 L1408.0 237.1 L1404.1 238.3 L1403.7 237.3 L1407.0 235.0 L1406.5 233.5 L1402.4 234.1 L1402.1 233.0 L1405.8 231.3 L1405.5 229.8 L1401.5 229.6 L1401.3 228.5 L1405.3 227.5 L1405.2 225.9 L1401.2 225.1 L1401.3 224.0 L1405.3 223.6 L1405.5 222.0 L1401.7 220.6 L1402.0 219.5 L1406.0 219.8 L1406.5 218.3 L1403.0 216.2 L1403.4 215.2 L1407.3 216.1 L1408.0 214.7 L1404.9 212.1 L1405.5 211.2 L1409.2 212.7 L1410.2 211.5 L1407.5 208.4 L1408.2 207.5 L1411.7 209.7 L1412.8 208.6 L1410.7 205.1 L1411.5 204.4 L1414.6 207.1 L1415.8 206.2 L1414.4 202.4 L1415.3 201.9 L1417.9 205.1 L1419.3 204.4 L1418.4 200.4 L1419.4 200.0 L1421.4 203.6 L1422.9 203.1 L1422.7 199.1 L1423.8 198.8 L1425.2 202.7 L1426.8 202.5 L1427.2 198.4 L1428.3 198.4 L1429.1 202.4 L1430.6 202.5 L1431.8 198.6 L1432.9 198.7 L1433.0 202.8 L1434.5 203.1 L1436.2 199.5 L1437.3 199.8 L1436.7 203.8 L1438.1 204.4 L1440.5 201.1 L1441.5 201.5 L1440.2 205.4 L1441.6 206.2 L1444.4 203.3 L1445.3 204.0 L1443.4 207.6 L1444.6 208.6 L1447.9 206.2 L1448.7 207.0 L1446.3 210.3 L1447.2 211.5 L1450.9 209.7 L1451.5 210.6 L1448.6 213.4 L1449.4 214.7 L1453.3 213.5 L1453.7 214.5 L1450.4 216.8 L1450.9 218.3 L1455.0 217.7 L1455.3 218.8 L1451.6 220.5 L1451.9 222.0 L1455.9 222.2 L1456.1 223.3 L1452.1 224.3Z" stroke="#ffffff" stroke-width="0.9" fill="none"/>
<circle cx="1428.7" cy="225.9" r="22" stroke="#8a8a8a" stroke-width="2.2" fill="none"/>
<circle cx="1428.7" cy="225.9" r="17.5" stroke="#ffffff" stroke-width="1" fill="none"/>
<circle cx="1428.7" cy="225.9" r="15" stroke="#8a8a8a" stroke-width="1.5" fill="none"/>
<circle cx="1428.7" cy="225.9" r="13" stroke="#ffffff" stroke-width="1" fill="none"/>
<circle cx="1428.7" cy="225.9" r="9.5" stroke="#ffffff" stroke-width="1" fill="none"/>
<circle cx="1357" cy="188" r="4" stroke="#ffffff" stroke-width="1" fill="none"/>
<circle cx="1357" cy="188" r="1.5" stroke="#ffffff" stroke-width="1" fill="none"/>
<circle cx="1425" cy="188" r="4" stroke="#ffffff" stroke-width="1" fill="none"/>
<circle cx="1425" cy="188" r="1.5" stroke="#ffffff" stroke-width="1" fill="none"/>
<circle cx="1357" cy="288" r="4" stroke="#ffffff" stroke-width="1" fill="none"/>
<circle cx="1357" cy="288" r="1.5" stroke="#ffffff" stroke-width="1" fill="none"/>
<circle cx="1425" cy="288" r="4" stroke="#ffffff" stroke-width="1" fill="none"/>
<circle cx="1425" cy="288" r="1.5" stroke="#ffffff" stroke-width="1" fill="none"/>
<rect x="1366.5" y="206" width="49.5" height="107.5" stroke="#ffffff" stroke-width="1" fill="none"/>
<rect x="1367" y="206.5" width="48.5" height="106.5" fill="#000"/>
<rect x="1366.5" y="206" width="49.5" height="107.5" stroke="#ffffff" stroke-width="1" fill="none"/>
<path d="M1370.5 206V313.5" stroke="#ffffff" stroke-width="1"/>
<path d="M1412.5 206V313.5" stroke="#ffffff" stroke-width="1"/>
<path d="M1366.5 206L1375 196Q1391 189 1407 196L1416 206" stroke="#ffffff" stroke-width="1" fill="none"/>
<circle cx="1391.9" cy="225.9" r="10" stroke="#ffffff" stroke-width="1" fill="none"/>
<path d="M1399 222H1402V230H1399" stroke="#ffffff" stroke-width="1" fill="none"/>
<circle cx="1391.9" cy="293.8" r="16" stroke="#ffffff" stroke-width="1" fill="none"/>
<circle cx="1391.9" cy="293.8" r="11" stroke="#ffffff" stroke-width="1" fill="none"/>
<path d="M1391.9 274V313" stroke="#ffffff" stroke-width="1"/>
<rect x="1360.5" y="313.5" width="55.5" height="59.5" stroke="#ffffff" stroke-width="1" fill="none"/>
<path d="M1366.5 313.5V373" stroke="#ffffff" stroke-width="1"/>
<path d="M1360.5 351.5H1416" stroke="#ffffff" stroke-width="1"/>
<path d="M1360.5 354.5H1416" stroke="#8a8a8a" stroke-width="1"/>
<circle cx="1391.9" cy="336.2" r="6" stroke="#ffffff" stroke-width="1" fill="none"/>
<circle cx="1391.9" cy="336.2" r="3" stroke="#ffffff" stroke-width="1" fill="none"/>
<rect x="1354.5" y="305" width="6" height="48" stroke="#ffffff" stroke-width="1" fill="none"/>
<path d="M1353 316V342Q1353 346 1357 346H1360.5" stroke="#ffffff" stroke-width="1" fill="none"/>
<rect x="1359.5" y="254" width="7" height="50.5" stroke="#8a8a8a" stroke-width="1" fill="none"/>
<g shape-rendering="crispEdges">
<path d="M1416 302.5H1887" stroke="#ffffff" stroke-width="1"/>
<path d="M1416 368.5H1887" stroke="#ffffff" stroke-width="1"/>
</g>
<rect x="1459.5" y="282.5" width="25" height="20" stroke="#ffffff" stroke-width="1" fill="none"/>
<circle cx="1474" cy="292.4" r="4" stroke="#ffffff" stroke-width="1" fill="none"/>
<rect x="1459.5" y="368.5" width="25" height="22" stroke="#ffffff" stroke-width="1" fill="none"/>
<circle cx="1474" cy="381.5" r="4" stroke="#ffffff" stroke-width="1" fill="none"/>
<rect x="1560.5" y="282.5" width="25" height="20" stroke="#ffffff" stroke-width="1" fill="none"/>
<circle cx="1571.6" cy="292.4" r="4" stroke="#ffffff" stroke-width="1" fill="none"/>
<rect x="1560.5" y="368.5" width="25" height="22" stroke="#ffffff" stroke-width="1" fill="none"/>
<circle cx="1571.6" cy="381.5" r="4" stroke="#ffffff" stroke-width="1" fill="none"/>
<rect x="1724.5" y="282.5" width="25" height="20" stroke="#ffffff" stroke-width="1" fill="none"/>
<circle cx="1737" cy="292.4" r="4" stroke="#ffffff" stroke-width="1" fill="none"/>
<rect x="1724.5" y="368.5" width="25" height="22" stroke="#ffffff" stroke-width="1" fill="none"/>
<circle cx="1737" cy="381.5" r="4" stroke="#ffffff" stroke-width="1" fill="none"/>
<rect x="1821.5" y="282.5" width="25" height="20" stroke="#ffffff" stroke-width="1" fill="none"/>
<circle cx="1834" cy="292.4" r="4" stroke="#ffffff" stroke-width="1" fill="none"/>
<rect x="1821.5" y="368.5" width="25" height="22" stroke="#ffffff" stroke-width="1" fill="none"/>
<circle cx="1834" cy="381.5" r="4" stroke="#ffffff" stroke-width="1" fill="none"/>
<path d="M1456.5 282V302.5" stroke="#ffffff" stroke-width="1"/>
<path d="M1454 302V290H1459" stroke="#ffffff" stroke-width="1" fill="none"/>
<rect x="1502.8" y="289.5" width="40" height="93" stroke="#ffffff" stroke-width="1" fill="none"/>
<rect x="1504.3" y="295" width="7" height="82" rx="3.5" stroke="#ffffff" stroke-width="1" fill="none"/>
<rect x="1534.3" y="295" width="7" height="82" rx="3.5" stroke="#ffffff" stroke-width="1" fill="none"/>
<rect x="1486.3" y="279.5" width="13" height="22.5" stroke="#ffffff" stroke-width="1" fill="none"/>
<path d="M1489.8 274.5V302" stroke="#ffffff" stroke-width="1"/>
<path d="M1487.3 274.5V302" stroke="#ffffff" stroke-width="1"/>
<rect x="1486.3" y="370" width="13" height="13" stroke="#ffffff" stroke-width="1" fill="none"/>
<rect x="1546.3" y="279.5" width="13" height="22.5" stroke="#ffffff" stroke-width="1" fill="none"/>
<path d="M1555.8 274.5V302" stroke="#ffffff" stroke-width="1"/>
<path d="M1558.3 274.5V302" stroke="#ffffff" stroke-width="1"/>
<rect x="1546.3" y="370" width="13" height="13" stroke="#ffffff" stroke-width="1" fill="none"/>
<rect x="1460.8" y="283.5" width="25" height="18.5" stroke="#ffffff" stroke-width="1" fill="none"/>
<circle cx="1474.1" cy="292.2" r="3.5" stroke="#ffffff" stroke-width="1" fill="none"/>
<rect x="1560.8" y="283.5" width="25" height="18.5" stroke="#ffffff" stroke-width="1" fill="none"/>
<circle cx="1571.6" cy="292.2" r="3.5" stroke="#ffffff" stroke-width="1" fill="none"/>
<rect x="1460.8" y="370" width="25" height="19.5" stroke="#ffffff" stroke-width="1" fill="none"/>
<circle cx="1474.1" cy="381.8" r="3.5" stroke="#ffffff" stroke-width="1" fill="none"/>
<rect x="1560.8" y="370" width="25" height="19.5" stroke="#ffffff" stroke-width="1" fill="none"/>
<circle cx="1571.6" cy="381.8" r="3.5" stroke="#ffffff" stroke-width="1" fill="none"/>
<rect x="1486.8" y="370" width="72" height="76.5" stroke="#ffffff" stroke-width="1" fill="none"/>
<path d="M1491.8 370V446.5" stroke="#ffffff" stroke-width="1"/>
<path d="M1554.8 370V446.5" stroke="#ffffff" stroke-width="1"/>
<path d="M1509.3 382.8L1511.8 392.5M1537.3 382.8L1534.8 392.5" stroke="#ffffff" stroke-width="1" fill="none"/>
<circle cx="1522.8" cy="413" r="20.5" stroke="#ffffff" stroke-width="1" fill="none"/>
<circle cx="1522.8" cy="413" r="17.5" stroke="#ffffff" stroke-width="1" fill="none"/>
<path d="M1514.8 446L1522.8 437L1531.3 446" stroke="#ffffff" stroke-width="1" fill="none"/>
<path d="M1519.8 241.5V289.5" stroke="#ffffff" stroke-width="1"/>
<path d="M1525.8 241.5V289.5" stroke="#ffffff" stroke-width="1"/>
<rect x="1491.8" y="210.5" width="61" height="32" rx="3" stroke="#ffffff" stroke-width="1" fill="none"/>
<rect x="1499.8" y="214.5" width="46" height="23" rx="2" stroke="#ffffff" stroke-width="1" fill="none"/>
<path d="M1499.8 219.5H1545.8" stroke="#8a8a8a" stroke-width="1"/>
<rect x="1513.8" y="189.5" width="18" height="18" rx="2" stroke="#ffffff" stroke-width="1" fill="none"/>
<path d="M1513.8 197.5H1531.8" stroke="#ffffff" stroke-width="1"/>
<path d="M1516.8 189.5V186H1528.8V189.5" stroke="#ffffff" stroke-width="1" fill="none"/>
<rect x="1486.8" y="450" width="18" height="14.5" rx="2" stroke="#ffffff" stroke-width="1" fill="none"/>
<path d="M1486.8 457.5H1504.8" stroke="#ffffff" stroke-width="1"/>
<rect x="1473.8" y="404.5" width="14" height="17" rx="2" stroke="#ffffff" stroke-width="1" fill="none"/>
<rect x="1559.3" y="405.5" width="9" height="14" stroke="#ffffff" stroke-width="1" fill="none"/>
<rect x="1765.8" y="289.5" width="40" height="93" stroke="#ffffff" stroke-width="1" fill="none"/>
<rect x="1767.3" y="295" width="7" height="82" rx="3.5" stroke="#ffffff" stroke-width="1" fill="none"/>
<rect x="1797.3" y="295" width="7" height="82" rx="3.5" stroke="#ffffff" stroke-width="1" fill="none"/>
<rect x="1749.3" y="279.5" width="13" height="22.5" stroke="#ffffff" stroke-width="1" fill="none"/>
<path d="M1752.8 274.5V302" stroke="#ffffff" stroke-width="1"/>
<path d="M1750.3 274.5V302" stroke="#ffffff" stroke-width="1"/>
<rect x="1749.3" y="370" width="13" height="13" stroke="#ffffff" stroke-width="1" fill="none"/>
<rect x="1809.3" y="279.5" width="13" height="22.5" stroke="#ffffff" stroke-width="1" fill="none"/>
<path d="M1818.8 274.5V302" stroke="#ffffff" stroke-width="1"/>
<path d="M1821.3 274.5V302" stroke="#ffffff" stroke-width="1"/>
<rect x="1809.3" y="370" width="13" height="13" stroke="#ffffff" stroke-width="1" fill="none"/>
<rect x="1723.8" y="283.5" width="25" height="18.5" stroke="#ffffff" stroke-width="1" fill="none"/>
<circle cx="1737.1" cy="292.2" r="3.5" stroke="#ffffff" stroke-width="1" fill="none"/>
<rect x="1823.8" y="283.5" width="25" height="18.5" stroke="#ffffff" stroke-width="1" fill="none"/>
<circle cx="1834.6" cy="292.2" r="3.5" stroke="#ffffff" stroke-width="1" fill="none"/>
<rect x="1723.8" y="370" width="25" height="19.5" stroke="#ffffff" stroke-width="1" fill="none"/>
<circle cx="1737.1" cy="381.8" r="3.5" stroke="#ffffff" stroke-width="1" fill="none"/>
<rect x="1823.8" y="370" width="25" height="19.5" stroke="#ffffff" stroke-width="1" fill="none"/>
<circle cx="1834.6" cy="381.8" r="3.5" stroke="#ffffff" stroke-width="1" fill="none"/>
<rect x="1749.8" y="370" width="72" height="76.5" stroke="#ffffff" stroke-width="1" fill="none"/>
<path d="M1754.8 370V446.5" stroke="#ffffff" stroke-width="1"/>
<path d="M1817.8 370V446.5" stroke="#ffffff" stroke-width="1"/>
<path d="M1772.3 382.8L1774.8 392.5M1800.3 382.8L1797.8 392.5" stroke="#ffffff" stroke-width="1" fill="none"/>
<circle cx="1785.8" cy="413" r="20.5" stroke="#ffffff" stroke-width="1" fill="none"/>
<circle cx="1785.8" cy="413" r="17.5" stroke="#ffffff" stroke-width="1" fill="none"/>
<path d="M1777.8 446L1785.8 437L1794.3 446" stroke="#ffffff" stroke-width="1" fill="none"/>
<path d="M1782.8 241.5V289.5" stroke="#ffffff" stroke-width="1"/>
<path d="M1788.8 241.5V289.5" stroke="#ffffff" stroke-width="1"/>
<rect x="1754.8" y="210.5" width="61" height="32" rx="3" stroke="#ffffff" stroke-width="1" fill="none"/>
<rect x="1762.8" y="214.5" width="46" height="23" rx="2" stroke="#ffffff" stroke-width="1" fill="none"/>
<path d="M1762.8 219.5H1808.8" stroke="#8a8a8a" stroke-width="1"/>
<rect x="1776.8" y="189.5" width="18" height="18" rx="2" stroke="#ffffff" stroke-width="1" fill="none"/>
<path d="M1776.8 197.5H1794.8" stroke="#ffffff" stroke-width="1"/>
<path d="M1779.8 189.5V186H1791.8V189.5" stroke="#ffffff" stroke-width="1" fill="none"/>
<rect x="1803.8" y="450" width="18" height="14.5" rx="2" stroke="#ffffff" stroke-width="1" fill="none"/>
<path d="M1803.8 457.5H1821.8" stroke="#ffffff" stroke-width="1"/>
<rect x="1820.8" y="404.5" width="14" height="17" rx="2" stroke="#ffffff" stroke-width="1" fill="none"/>
<rect x="1740.3" y="405.5" width="9" height="14" stroke="#ffffff" stroke-width="1" fill="none"/>
<path d="M1553 210.5H1817" stroke="#ffffff" stroke-width="1"/>
<path d="M1486 446.5H1822" stroke="#ffffff" stroke-width="1"/>
<path d="M1486 449.5H1822" stroke="#ffffff" stroke-width="1"/>
<rect x="1584.5" y="225.5" width="140" height="77" stroke="#ffffff" stroke-width="1" fill="none"/>
<rect x="1598.5" y="240.5" width="44" height="62" stroke="#ffffff" stroke-width="1" fill="none"/>
<path d="M1602.5 243V302.5" stroke="#ffffff" stroke-width="1"/>
<path d="M1638.5 243V302.5" stroke="#ffffff" stroke-width="1"/>
<path d="M1598.5 244.5H1642.5" stroke="#ffffff" stroke-width="1"/>
<path d="M1587.5 225.5V302.5" stroke="#ffffff" stroke-width="1"/>
<path d="M1720.5 225.5V302.5" stroke="#ffffff" stroke-width="1"/>
<rect x="1608.5" y="199.5" width="35" height="15" rx="2" stroke="#ffffff" stroke-width="1" fill="none"/>
<rect x="1608.5" y="214.5" width="35" height="11" rx="1.5" stroke="#ffffff" stroke-width="1" fill="none"/>
<path d="M1608.5 206.5H1643.5" stroke="#ffffff" stroke-width="1"/>
<path d="M1608.5 220.5H1643.5" stroke="#ffffff" stroke-width="1"/>
<path d="M1622 169V199.5" stroke="#ffffff" stroke-width="1"/>
<path d="M1630 169V199.5" stroke="#ffffff" stroke-width="1"/>
<rect x="1664.5" y="199.5" width="36" height="15" rx="2" stroke="#ffffff" stroke-width="1" fill="none"/>
<rect x="1664.5" y="214.5" width="36" height="11" rx="1.5" stroke="#ffffff" stroke-width="1" fill="none"/>
<path d="M1664.5 206.5H1700.5" stroke="#ffffff" stroke-width="1"/>
<path d="M1664.5 220.5H1700.5" stroke="#ffffff" stroke-width="1"/>
<path d="M1678.5 169V199.5" stroke="#ffffff" stroke-width="1"/>
<path d="M1686.5 169V199.5" stroke="#ffffff" stroke-width="1"/>
<rect x="1617" y="230" width="15" height="8" stroke="#ffffff" stroke-width="1" fill="none"/>
<rect x="1615" y="238" width="19" height="8" stroke="#ffffff" stroke-width="1" fill="none"/>
<path d="M1595 376.5H1716" stroke="#ffffff" stroke-width="1"/>
<path d="M1595 380.5H1716" stroke="#ffffff" stroke-width="1"/>
<circle cx="1654.1" cy="412.5" r="15.5" stroke="#ffffff" stroke-width="1" fill="none"/>
<circle cx="1654.1" cy="412.5" r="10" stroke="#ffffff" stroke-width="1" fill="none"/>
<path d="M1644 408Q1654 399 1664 408" stroke="#ffffff" stroke-width="1" fill="none"/>
<rect x="1823.5" y="250.5" width="25" height="23" stroke="#ffffff" stroke-width="1" fill="none"/>
<path d="M1830.5 250.5V273.5" stroke="#ffffff" stroke-width="1"/>
<path d="M1837.5 250.5V273.5" stroke="#ffffff" stroke-width="1"/>
<path d="M1844.5 250.5V273.5" stroke="#ffffff" stroke-width="1"/>
<rect x="1848.5" y="261.5" width="8" height="9" rx="2" stroke="#ffffff" stroke-width="1" fill="none"/>
<path d="M1823.5 273.5V302M1850.5 273.5V302M1823.5 273.5H1850.5" stroke="#ffffff" stroke-width="1" fill="none"/>
<rect x="1825.5" y="283" width="23" height="19" stroke="#ffffff" stroke-width="1" fill="none"/>
<circle cx="1834.1" cy="279.9" r="3.5" stroke="#ffffff" stroke-width="1" fill="none"/>
<circle cx="1834.1" cy="292.9" r="3.5" stroke="#ffffff" stroke-width="1" fill="none"/>
<rect x="1816.5" y="269.5" width="7" height="32.5" stroke="#ffffff" stroke-width="1" fill="none"/>
<path d="M1852.5 302V278L1866.5 275V302M1866.5 267.5H1873V302M1873 268H1887M1873 280H1887M1873 290H1887" stroke="#ffffff" stroke-width="1" fill="none"/>
<path d="M1818.5 370V440" stroke="#8a8a8a" stroke-width="1"/>
<path d="M1822.5 370V440" stroke="#ffffff" stroke-width="1"/>
<rect x="1823.5" y="403.5" width="13" height="17.5" rx="2" stroke="#ffffff" stroke-width="1" fill="none"/>
<path d="M1831.5 403.5V421" stroke="#8a8a8a" stroke-width="1"/>
<rect x="1869.5" y="382" width="17.5" height="32.5" stroke="#ffffff" stroke-width="1" fill="none"/>
<rect x="1867.5" y="414.5" width="19.5" height="8" stroke="#ffffff" stroke-width="1" fill="none"/>
<path d="M1874.5 414.5V428" stroke="#ffffff" stroke-width="1"/>
<path d="M1867.5 370V380H1887" stroke="#ffffff" stroke-width="1" fill="none"/>
<g shape-rendering="crispEdges">
<path d="M1344 336.5H1887" stroke="#ff1a1a" stroke-width="1" stroke-dasharray="28 6 4 6"/>
<path d="M1391.5 169V385" stroke="#ff1a1a" stroke-width="1" stroke-dasharray="22 5 4 5"/>
</g>
<rect x="1489" y="296" width="4" height="6" stroke="#ffffff" stroke-width="1" fill="none"/>
<path d="M866.5 567.5H788L774.5 571.5L760.5 582.5V660L774 670.5L787 674.5H866.5Z" stroke="#ffffff" stroke-width="1" fill="none"/>
<path d="M764.5 584V659" stroke="#ffffff" stroke-width="1"/>
<path d="M788.5 567.5V674.5" stroke="#ffffff" stroke-width="1"/>
<path d="M866.5 574H955" stroke="#8a8a8a" stroke-width="2.2"/>
<path d="M866.5 579H955" stroke="#8a8a8a" stroke-width="2.2"/>
<path d="M866.5 604H955" stroke="#8a8a8a" stroke-width="2.2"/>
<path d="M866.5 616H955" stroke="#8a8a8a" stroke-width="2.2"/>
<path d="M866.5 628H955" stroke="#8a8a8a" stroke-width="2.2"/>
<path d="M866.5 639H955" stroke="#8a8a8a" stroke-width="2.2"/>
<path d="M866.5 650H955" stroke="#8a8a8a" stroke-width="2.2"/>
<path d="M866.5 570.5H955" stroke="#8a8a8a" stroke-width="1"/>
<path d="M866.5 672.5H955" stroke="#8a8a8a" stroke-width="1"/>
<path d="M866.5 589.5H955" stroke="#8a8a8a" stroke-width="1"/>
<path d="M866.5 652.5H955" stroke="#8a8a8a" stroke-width="1"/>
<path d="M866.5 664.5H955" stroke="#8a8a8a" stroke-width="1"/>
<path d="M866.5 594.5H955" stroke="#ffffff" stroke-width="1"/>
<path d="M866.5 567.5V674.5" stroke="#ffffff" stroke-width="1" fill="none"/>
<path d="M945 570.5Q954 571 954 580V590M945 672.5Q954 672 954 663V652" stroke="#8a8a8a" stroke-width="1" fill="none"/>
<circle cx="853.1" cy="621" r="3" stroke="#8a8a8a" stroke-width="1" fill="none"/>
<path d="M850 621H856" stroke="#8a8a8a" stroke-width="1"/>
<path d="M851.5 567.5V566H856V567.5M851.5 674.5V676H856V674.5" stroke="#8a8a8a" stroke-width="1" fill="none"/>
<rect x="955.5" y="569.5" width="7.5" height="8.5" stroke="#ffffff" stroke-width="1" fill="none"/>
<rect x="955.5" y="612.5" width="7.5" height="19.5" stroke="#ffffff" stroke-width="1" fill="none"/>
<rect x="955.5" y="663" width="7.5" height="11" stroke="#ffffff" stroke-width="1" fill="none"/>
<path d="M963 570V674" stroke="#ffffff" stroke-width="1"/>
<path d="M963 579L973 582M963 663L973 660" stroke="#ffffff" stroke-width="1" fill="none"/>
<rect x="972.5" y="583" width="9" height="8.5" stroke="#ffffff" stroke-width="1" fill="none"/>
<rect x="972.5" y="652" width="9" height="8" stroke="#ffffff" stroke-width="1" fill="none"/>
<path d="M978.5 560V685" stroke="#ffffff" stroke-width="1"/>
<rect x="981.5" y="544.5" width="25" height="154" rx="3" stroke="#ffffff" stroke-width="1" fill="none"/>
<rect x="984.5" y="548" width="19.5" height="147" rx="2" stroke="#ffffff" stroke-width="1" fill="none"/>
<path d="M992.5 548V695" stroke="#ffffff" stroke-width="1"/>
<path d="M998.5 548V695" stroke="#ffffff" stroke-width="1"/>
<path d="M984.5 553.5H1004" stroke="#ffffff" stroke-width="1"/>
<path d="M984.5 561.5H1004" stroke="#ffffff" stroke-width="1"/>
<path d="M984.5 683.5H1004" stroke="#ffffff" stroke-width="1"/>
<path d="M984.5 691.5H1004" stroke="#ffffff" stroke-width="1"/>
<path d="M981.5 604.5H1006.5" stroke="#8a8a8a" stroke-width="1"/>
<path d="M981.5 639.5H1006.5" stroke="#8a8a8a" stroke-width="1"/>
<path d="M1010.2 557V686" stroke="#fff" stroke-width="6" stroke-dasharray="1.4 1.4" fill="none"/>
<rect x="1006.5" y="556.5" width="7.5" height="130" stroke="#ffffff" stroke-width="1" fill="none"/>
<rect x="1014" y="562.5" width="12.5" height="48" rx="2" stroke="#ffffff" stroke-width="1" fill="none"/>
<rect x="1014" y="632" width="12.5" height="48.5" rx="2" stroke="#ffffff" stroke-width="1" fill="none"/>
<path d="M1026.5 591.5H1073" stroke="#ffffff" stroke-width="1"/>
<path d="M1026.5 594.5H1073" stroke="#ffffff" stroke-width="1"/>
<path d="M1014 612.5H1060" stroke="#ffffff" stroke-width="1"/>
<path d="M1014 631.5H1060" stroke="#ffffff" stroke-width="1"/>
<rect x="1059.5" y="596.5" width="13" height="49" rx="2" stroke="#ffffff" stroke-width="1" fill="none"/>
<rect x="1073.5" y="591.5" width="5" height="60.5" stroke="#ffffff" stroke-width="1" fill="none"/>
<rect x="1079.5" y="596.5" width="26" height="51" rx="3" stroke="#ffffff" stroke-width="1" fill="none"/>
<rect x="1083" y="600" width="19" height="44" rx="2" stroke="#ffffff" stroke-width="1" fill="none"/>
<path d="M1087.5 600V644" stroke="#ffffff" stroke-width="1"/>
<path d="M1094.5 600V644" stroke="#ffffff" stroke-width="1"/>
<path d="M1083 611.5H1102" stroke="#ffffff" stroke-width="1"/>
<path d="M1083 634.5H1102" stroke="#ffffff" stroke-width="1"/>
<rect x="1084.5" y="585.5" width="13" height="11" rx="2" stroke="#ffffff" stroke-width="1" fill="none"/>
<rect x="1084.5" y="645.5" width="13" height="8.5" rx="1" stroke="#ffffff" stroke-width="1" fill="none"/>
<path d="M1106.5 604L1110 598V640L1106.5 646M1110 612H1117M1110 630H1117" stroke="#ffffff" stroke-width="1" fill="none"/>
<g shape-rendering="crispEdges">
<path d="M760 621.5H1128" stroke="#ff1a1a" stroke-width="1" stroke-dasharray="18 5 3 5"/>
<path d="M1043.5 576V975" stroke="#ff1a1a" stroke-width="1" stroke-dasharray="12 4 3 4"/>
<path d="M1009.5 687V975" stroke="#ffffff" stroke-width="1"/>
<path d="M1076.5 652V975" stroke="#ffffff" stroke-width="1"/>
<path d="M1135 621.5H1242" stroke="#9a9a9a" stroke-width="1"/>
<path d="M1231.5 622V975" stroke="#9a9a9a" stroke-width="1"/>
<path d="M1163.5 754V975" stroke="#9a9a9a" stroke-width="1"/>
<path d="M993 753.5H1174" stroke="#9a9a9a" stroke-width="1"/>
</g>
<path d="M1231.5 622L1229.5 631H1233.5Z M1163.5 754L1161.5 763H1165.5Z" stroke="#9a9a9a" stroke-width="1" fill="#9a9a9a"/>
<text x="1157.5" y="943.3" font-family="Liberation Mono" font-size="17" fill="#dcdcdc" text-anchor="start" transform="rotate(-90 1157.5 943.3)" textLength="117" lengthAdjust="spacingAndGlyphs">300mm [11,81in]</text>
<text x="1225" y="948.5" font-family="Liberation Mono" font-size="17" fill="#dcdcdc" text-anchor="start" transform="rotate(-90 1225 948.5)" textLength="128" lengthAdjust="spacingAndGlyphs">600mm [23,62in]</text>
<path d="M597.6 501.3 A55.7 55.7 0 0 1 675.5 456.7 A55.6 55.6 0 0 1 765.2 454.8 A54.4 54.4 0 0 1 852.8 459 A57.6 57.6 0 0 1 945.6 462 A54.1 54.1 0 0 1 1029.6 485.4 A77.4 77.4 0 0 1 1152.9 504.9 A59.7 59.7 0 0 1 1230 562.5 A56 56 0 0 1 1281 637 A58.7 58.7 0 0 1 1246.5 725.2 A58.4 58.4 0 0 1 1170 780.2 A56.4 56.4 0 0 1 1081 799 A57.7 57.7 0 0 1 988 797.7 A58.9 58.9 0 0 1 895 778.5 A57.5 57.5 0 0 1 804.6 758 A63.7 63.7 0 0 1 710.3 717.3 A55.6 55.6 0 0 1 636.5 666.3 A55.4 55.4 0 0 1 587 592 A56.6 56.6 0 0 1 597.6 501.3" stroke="#ff8000" stroke-width="1" fill="none"/>
<path d="M1275 587.5L1335.5 562.5H1486" stroke="#ff8000" stroke-width="1" fill="none"/>
<path d="M1275 587.5L1285 580L1287 585Z" stroke="#ff8000" stroke-width="1" fill="#ff8000"/>
<text x="1352.5" y="557.8" font-family="Liberation Mono" font-size="15.5" fill="#e8e8e8" text-anchor="start" textLength="134" lengthAdjust="spacingAndGlyphs">Review Gearbox</text>
<g shape-rendering="crispEdges">
<path d="M391 724.5H748.5" stroke="#ffffff" stroke-width="1"/>
<path d="M391 728.5H748.5" stroke="#8a8a8a" stroke-width="1"/>
<path d="M391 742.5H748.5" stroke="#ffffff" stroke-width="1"/>
<path d="M391 749.5H748.5" stroke="#8a8a8a" stroke-width="1"/>
<path d="M391 752.5H748.5" stroke="#ffffff" stroke-width="1"/>
<path d="M391 757.5H748.5" stroke="#8a8a8a" stroke-width="1"/>
<path d="M391 763.5H748.5" stroke="#ffffff" stroke-width="1"/>
<path d="M391 777.5H748.5" stroke="#8a8a8a" stroke-width="1"/>
<path d="M391 782.5H748.5" stroke="#ffffff" stroke-width="1"/>
<path d="M391 833.5H709" stroke="#ffffff" stroke-width="1"/>
<path d="M391 836.5H709" stroke="#8a8a8a" stroke-width="1"/>
<path d="M391 876.5H709" stroke="#8a8a8a" stroke-width="1"/>
<path d="M391 879.5H748" stroke="#ffffff" stroke-width="1"/>
<path d="M391 890.5H748.5" stroke="#ffffff" stroke-width="1"/>
<path d="M391 893.5H748.5" stroke="#8a8a8a" stroke-width="1"/>
<path d="M391 933.5H595.5" stroke="#8a8a8a" stroke-width="1"/>
<path d="M391 936.5H595.5" stroke="#ffffff" stroke-width="1"/>
<path d="M683.5 933.5H748.5" stroke="#8a8a8a" stroke-width="1"/>
<path d="M683.5 936.5H748.5" stroke="#ffffff" stroke-width="1"/>
<path d="M748.5 721.5V975" stroke="#ffffff" stroke-width="1"/>
<path d="M801.5 721.5V975" stroke="#ffffff" stroke-width="1"/>
<path d="M748.5 721.5H801.5" stroke="#ffffff" stroke-width="1"/>
</g>
<circle cx="775.2" cy="752.8" r="5" stroke="#ffffff" stroke-width="1" fill="none"/>
<circle cx="775.2" cy="752.8" r="3" stroke="#ffffff" stroke-width="1" fill="none"/>
<path d="M783.7 854.3 L779.5 861.7 L771.0 861.7 L766.7 854.3 L771.0 846.9 L779.5 846.9Z" stroke="#ffffff" stroke-width="1" fill="none"/>
<circle cx="775.2" cy="854.3" r="6.5" stroke="#ffffff" stroke-width="1" fill="none"/>
<circle cx="775.2" cy="854.3" r="4.5" stroke="#ffffff" stroke-width="1" fill="none"/>
<path d="M783.7 914.3 L779.5 921.7 L771.0 921.7 L766.7 914.3 L771.0 906.9 L779.5 906.9Z" stroke="#ffffff" stroke-width="1" fill="none"/>
<circle cx="775.2" cy="914.3" r="6.5" stroke="#ffffff" stroke-width="1" fill="none"/>
<circle cx="775.2" cy="914.3" r="4.5" stroke="#ffffff" stroke-width="1" fill="none"/>
<path d="M785.2 752.8 L780.2 761.5 L770.2 761.5 L765.2 752.8 L770.2 744.1 L780.2 744.1Z" stroke="#ffffff" stroke-width="1" fill="none"/>
<circle cx="775.2" cy="752.8" r="8" stroke="#ffffff" stroke-width="1" fill="none"/>
<rect x="708.5" y="830.5" width="38.5" height="48" stroke="#ffffff" stroke-width="1" fill="none"/>
<rect x="742" y="830" width="5" height="50" rx="2" stroke="#ffffff" stroke-width="1" fill="none"/>
<path d="M709 854.5H747" stroke="#ffffff" stroke-width="1"/>
<path d="M709 851.5H747" stroke="#8a8a8a" stroke-width="1"/>
<rect x="726.5" y="850.5" width="9" height="7" stroke="#ffffff" stroke-width="1" fill="none"/>
<rect x="728.5" y="857.5" width="5.5" height="7" stroke="#ffffff" stroke-width="1" fill="none"/>
<rect x="595.5" y="888.5" width="88" height="51" stroke="#ffffff" stroke-width="1" fill="none"/>
<rect x="629.5" y="887.5" width="18" height="53.5" rx="3" stroke="#ffffff" stroke-width="1" fill="none"/>
<path d="M634 888V941" stroke="#8a8a8a" stroke-width="1"/>
<path d="M643 888V941" stroke="#8a8a8a" stroke-width="1"/>
<path d="M596 913.5H683" stroke="#8a8a8a" stroke-width="1"/>
<path d="M596 915.5H683" stroke="#ffffff" stroke-width="1"/>
<rect x="613.5" y="910.5" width="8.5" height="6.5" stroke="#ffffff" stroke-width="1" fill="none"/>
<rect x="615" y="917" width="5.5" height="7.5" stroke="#ffffff" stroke-width="1" fill="none"/>
<rect x="656.5" y="910.5" width="8.5" height="6.5" stroke="#ffffff" stroke-width="1" fill="none"/>
<rect x="658" y="917" width="5.5" height="7.5" stroke="#ffffff" stroke-width="1" fill="none"/>
<rect x="418.5" y="932.5" width="15" height="15" stroke="#ffffff" stroke-width="1" fill="none"/>
<path d="M426.5 871V939" stroke="#19e619" stroke-width="1"/>
<path d="M418.5 871.5L426.5 849.5L434 871.5Z" stroke="#19e619" stroke-width="1" fill="none"/>
<path d="M426.5 939.5H494.5" stroke="#ff1a1a" stroke-width="1"/>
<path d="M494.5 932L516 939.5L494.5 947.5Z" stroke="#ff1a1a" stroke-width="1" fill="none"/>
<path d="M534.5 932.5L545.5 946M545.5 932.5L534.5 946" stroke="#ffffff" stroke-width="1" fill="none"/>
<path d="M420.5 818.5L426.5 826L432 818.5M426.5 826V832.5" stroke="#ffffff" stroke-width="1" fill="none"/>
<g shape-rendering="crispEdges">
<rect x="801.5" y="721.5" width="192" height="63" stroke="#ffffff" stroke-width="1" fill="none"/>
<path d="M801.5 725.5H990" stroke="#ffffff" stroke-width="1"/>
<path d="M801.5 727.5H990" stroke="#8a8a8a" stroke-width="1"/>
<path d="M801.5 743.5H990" stroke="#ffffff" stroke-width="1"/>
<path d="M801.5 749.5H990" stroke="#8a8a8a" stroke-width="1"/>
<path d="M801.5 753.5H990" stroke="#ffffff" stroke-width="1"/>
<path d="M801.5 762.5H990" stroke="#ffffff" stroke-width="1"/>
<path d="M801.5 777.5H990" stroke="#8a8a8a" stroke-width="1"/>
<path d="M801.5 781.5H990" stroke="#ffffff" stroke-width="1"/>
</g>
<path d="M920 721.5V719H992V721.5M920 784.5V786H992V784.5" stroke="#ffffff" stroke-width="1" fill="none"/>
<rect x="988" y="722" width="8" height="62" rx="2" stroke="#ffffff" stroke-width="1" fill="none"/>
<path d="M996.5 728H1037Q1040 730 1037 732H996.5M996.5 777H1037Q1040 779 1037 781H996.5" stroke="#ffffff" stroke-width="1" fill="none"/>
<path d="M996.5 734.5H1082Q1086 737 1082 740.5H1002M996.5 764.5H1082Q1086 767 1082 770.5H1002" stroke="#ffffff" stroke-width="1" fill="none"/>
<path d="M996 728V781M1002 734V771" stroke="#ffffff" stroke-width="1" fill="none"/>
<rect x="999" y="743" width="8" height="20" stroke="#ffffff" stroke-width="1" fill="none"/>
<rect x="905.5" y="814.5" width="63" height="83" rx="2" stroke="#ffffff" stroke-width="1" fill="none"/>
<path d="M928 838.5L948.5 838.5L958.5 855.7L948.5 873L928 873L918 855.7Z" stroke="#fff" fill="none"/>
<circle cx="938.2" cy="855.7" r="15" stroke="#ffffff" stroke-width="1" fill="none"/>
<circle cx="938.2" cy="855.7" r="12" stroke="#ffffff" stroke-width="1" fill="none"/>
<circle cx="938.2" cy="855.7" r="9.5" stroke="#ffffff" stroke-width="1" fill="none"/>
<rect x="801.5" y="834.5" width="66" height="44" stroke="#ffffff" stroke-width="1" fill="none"/>
<rect x="867.5" y="830.5" width="38" height="51" stroke="#ffffff" stroke-width="1" fill="none"/>
<rect x="801.5" y="890.5" width="66" height="45" stroke="#ffffff" stroke-width="1" fill="none"/>
<rect x="867.5" y="888.5" width="36" height="49" stroke="#ffffff" stroke-width="1" fill="none"/>
<path d="M801.5 837.5H867.5" stroke="#8a8a8a" stroke-width="1"/>
<path d="M801.5 893.5H867.5" stroke="#8a8a8a" stroke-width="1"/>
<rect x="981" y="680" width="26" height="17.5" rx="2" stroke="#ffffff" stroke-width="1" fill="none"/>
<path d="M391.5 169V975" stroke="#6a6a6a" stroke-width="1"/></svg></div>
<div id="rtool" class="a"></div>
<svg class="a" style="left:0;top:0;z-index:2" width="40" height="720" viewBox="0 0 40 720"><path d="M12 173 H26" stroke="#fff" stroke-width="2" stroke-dasharray="2 1"/><path d="M13 195 L24 183" stroke="#1f3556" stroke-width="1.6"/><rect x="11.5" y="193.5" width="3" height="3" fill="#fff" stroke="#2f6fd0" stroke-width="1"/><rect x="22.5" y="181.5" width="3" height="3" fill="#fff" stroke="#2f6fd0" stroke-width="1"/><path d="M25 197 h3 v-3 z" fill="#111"/><path d="M12 210 Q12 205 16 206 M16 206 Q17 215 24 214" fill="none" stroke="#1f3556" stroke-width="1.4"/><rect x="14.5" y="205.5" width="3" height="3" fill="#fff" stroke="#2f6fd0" stroke-width="1"/><rect x="14.5" y="212.5" width="3" height="3" fill="#fff" stroke="#2f6fd0" stroke-width="1"/><rect x="22.5" y="212.5" width="3" height="3" fill="#fff" stroke="#2f6fd0" stroke-width="1"/><path d="M25 218 h3 v-3 z" fill="#111"/><path d="M13 227 L25 238 M15 225 L27 236" stroke="#1f3556" stroke-width="2"/><rect x="13.5" y="223.5" width="3" height="3" fill="#fff" stroke="#2f6fd0" stroke-width="1"/><rect x="23.5" y="234.5" width="3" height="3" fill="#fff" stroke="#2f6fd0" stroke-width="1"/><path d="M12 261 Q12 252 18 254 Q22 256 25 248" fill="none" stroke="#1f3556" stroke-width="1.5"/><rect x="10.5" y="259.5" width="3" height="3" fill="#fff" stroke="#2f6fd0" stroke-width="1"/><rect x="23.5" y="246.5" width="3" height="3" fill="#fff" stroke="#2f6fd0" stroke-width="1"/><path d="M12 275 Q22 276 12 285 Q14 290 18 287" fill="none" stroke="#1f3556" stroke-width="1.5"/><path d="M17 283 L26 275" stroke="#f0a030" stroke-width="3"/><path d="M11 292 H27" stroke="#f2f2f2" stroke-width="1"/><circle cx="19" cy="307" r="7" fill="#eef0f4" stroke="#1f3556" stroke-width="1.5"/><rect x="20.5" y="302.5" width="3" height="3" fill="#fff" stroke="#2f6fd0" stroke-width="1"/><path d="M25 312 h3 v-3 z" fill="#111"/><path d="M12 335 Q14 322 25 322" fill="none" stroke="#1f3556" stroke-width="1.5"/><rect x="10.5" y="333.5" width="3" height="3" fill="#fff" stroke="#2f6fd0" stroke-width="1"/><rect x="14.5" y="324.5" width="3" height="3" fill="#fff" stroke="#2f6fd0" stroke-width="1"/><rect x="23.5" y="320.5" width="3" height="3" fill="#fff" stroke="#2f6fd0" stroke-width="1"/><path d="M25 337 h3 v-3 z" fill="#111"/><ellipse cx="19" cy="350" rx="7" ry="5" fill="#eef0f4" stroke="#1f3556" stroke-width="1.5"/><rect x="10.5" y="348.5" width="3" height="3" fill="#fff" stroke="#2f6fd0" stroke-width="1"/><rect x="24.5" y="348.5" width="3" height="3" fill="#fff" stroke="#2f6fd0" stroke-width="1"/><rect x="17.5" y="343.5" width="3" height="3" fill="#fff" stroke="#2f6fd0" stroke-width="1"/><path d="M25 357 h3 v-3 z" fill="#111"/><path d="M12 371 Q12 362 19 362 Q26 362 26 371" fill="none" stroke="#1f3556" stroke-width="1.5"/><rect x="10.5" y="369.5" width="3" height="3" fill="#fff" stroke="#2f6fd0" stroke-width="1"/><rect x="24.5" y="369.5" width="3" height="3" fill="#fff" stroke="#2f6fd0" stroke-width="1"/><rect x="17.5" y="373.5" width="3" height="3" fill="#fff" stroke="#2f6fd0" stroke-width="1"/><path d="M25 380 h3 v-3 z" fill="#111"/><path d="M11 388 H27" stroke="#f2f2f2" stroke-width="1"/><rect x="17" y="401" width="4" height="4" fill="#fff" stroke="#1f3556" stroke-width="1.2"/><path d="M11 418 H27" stroke="#f2f2f2" stroke-width="1"/><path d="M12 428 H26 L25 437 H12 Z" fill="#f4f6f8" stroke="#1f3556" stroke-width="1.3"/><rect x="10.5" y="435.5" width="3" height="3" fill="#fff" stroke="#2f6fd0" stroke-width="1"/><rect x="24.5" y="426.5" width="3" height="3" fill="#fff" stroke="#2f6fd0" stroke-width="1"/><path d="M11 448 L27 446 M11 452 L27 450 M11 456 L27 454 M11 460 L27 458" stroke="#555" stroke-width="2.2"/><path d="M19 469 L27 474 L25 484 L13 484 L11 474 Z" fill="#f4f6f8" stroke="#1f3556" stroke-width="1.4"/><circle cx="19" cy="477" r="1" fill="#2f6fd0"/><rect x="11.5" y="482.5" width="3" height="3" fill="#fff" stroke="#2f6fd0" stroke-width="1"/><path d="M25 487 h3 v-3 z" fill="#111"/><rect x="11" y="491" width="16" height="16" fill="#7a8088"/><path d="M13 494 H19 V499 H25 V505 H13 Z" fill="#f4f6f8" stroke="#1f3556" stroke-width="1"/><path d="M11 514 H27" stroke="#f2f2f2" stroke-width="1"/><circle cx="19" cy="529" r="6" fill="#eef0f4" stroke="#333" stroke-width="2"/><circle cx="19" cy="529" r="2.5" fill="#8a9098" stroke="#333" stroke-width="1"/><path d="M12 543 H26 V551 H20 L26 557 L17 551 H12 Z" fill="#f4f6f8" stroke="#1f3556" stroke-width="1.2"/><path d="M11 566 H27" stroke="#f2f2f2" stroke-width="1"/><rect x="12" y="575" width="12" height="9" fill="#f4f6f8" stroke="#1f3556" stroke-width="1.2"/><circle cx="23" cy="584" r="4" fill="#f4f6f8" stroke="#1f3556" stroke-width="1.2"/><rect x="10.5" y="580.5" width="3" height="3" fill="#fff" stroke="#2f6fd0" stroke-width="1"/><path d="M11 595 H27" stroke="#f2f2f2" stroke-width="1"/><rect x="12" y="603" width="14" height="14" fill="#f4f6f8" stroke="#222" stroke-width="1.2"/><path d="M13 614 L23 604 M15 617 L26 606 M12 610 L18 604 M19 617 L26 610" stroke="#222" stroke-width="1.2"/><path d="M14 628 Q13 623 18 624 Q21 621 24 625 Q28 627 26 631 Q28 636 23 637 Q20 641 16 637 Q11 636 13 632 Q10 629 14 628Z" fill="#f4f6f8" stroke="#1f3556" stroke-width="1.5"/><text x="19" y="660" font-family="Liberation Sans" font-weight="bold" font-size="17" fill="#2f6fd0" text-anchor="middle">A</text><path d="M11 663 H27" stroke="#111" stroke-width="1.2"/><text x="19" y="684" font-family="Liberation Sans" font-weight="bold" font-size="17" fill="#2f6fd0" text-anchor="middle">A</text></svg>
<svg class="a" style="left:1880px;top:0;z-index:2" width="40" height="620" viewBox="1880 0 40 620"><path d="M1894 173 H1908" stroke="#fff" stroke-width="2" stroke-dasharray="2 1"/><rect x="1891" y="265" width="21" height="20" fill="#b8d4ee" stroke="#e8f0f8" stroke-width="1"/><rect x="1891" y="288" width="21" height="20" fill="#b8d4ee" stroke="#e8f0f8" stroke-width="1"/><rect x="1891" y="494" width="21" height="20" fill="#b8d4ee" stroke="#e8f0f8" stroke-width="1"/><path d="M1894 189 H1907" stroke="#555" stroke-width="1"/><rect x="1893" y="188" width="2" height="2" fill="#555"/><rect x="1905" y="187" width="4" height="4" fill="#fff" stroke="#e0141e" stroke-width="1.3"/><path d="M1896 216 V209 H1906" fill="none" stroke="#555" stroke-width="1"/><rect x="1904" y="207" width="4" height="4" fill="#fff" stroke="#e0141e" stroke-width="1.3"/><path d="M1896 226 V240 M1908 228 V240" stroke="#1f3556" stroke-width="1.2"/><rect x="1894" y="224" width="4" height="4" fill="#fff" stroke="#e0141e" stroke-width="1.3"/><rect x="1900" y="231" width="4" height="4" fill="#fff" stroke="#e0141e" stroke-width="1.3"/><rect x="1906" y="238" width="4" height="4" fill="#fff" stroke="#e0141e" stroke-width="1.3"/><circle cx="1902" cy="254" r="7" fill="none" stroke="#1f3556" stroke-width="1.4"/><rect x="1904" y="257" width="4" height="4" fill="#fff" stroke="#e0141e" stroke-width="1.3"/><path d="M1893 268 L1908 282" stroke="#1f3556" stroke-width="1.5"/><rect x="1904" y="279" width="4" height="4" fill="#fff" stroke="#e0141e" stroke-width="1.3"/><path d="M1894 293 H1909 M1893 306 Q1901 296 1910 306" fill="none" stroke="#1f3556" stroke-width="1.4"/><rect x="1899" y="291" width="4" height="4" fill="#fff" stroke="#e0141e" stroke-width="1.3"/><rect x="1899" y="298" width="4" height="4" fill="#fff" stroke="#e0141e" stroke-width="1.3"/><circle cx="1902" cy="320" r="7" fill="none" stroke="#1f3556" stroke-width="1.4"/><rect x="1900" y="318" width="4" height="4" fill="#fff" stroke="#e0141e" stroke-width="1.3"/><path d="M1902 335 V347 M1894 347 H1910" stroke="#1f3556" stroke-width="1.4"/><rect x="1900" y="345" width="4" height="4" fill="#fff" stroke="#e0141e" stroke-width="1.3"/><path d="M1896 357 L1904 364" stroke="#1f3556" stroke-width="1.3"/><circle cx="1902" cy="367" r="5" fill="none" stroke="#1f3556" stroke-width="1.4"/><rect x="1904" y="362" width="4" height="4" fill="#fff" stroke="#e0141e" stroke-width="1.3"/><circle cx="1902" cy="386" r="7" fill="none" stroke="#1f3556" stroke-width="1.4"/><rect x="1900" y="377" width="4" height="4" fill="#fff" stroke="#e0141e" stroke-width="1.3"/><rect x="1893" y="384" width="4" height="4" fill="#fff" stroke="#e0141e" stroke-width="1.3"/><rect x="1907" y="384" width="4" height="4" fill="#fff" stroke="#e0141e" stroke-width="1.3"/><rect x="1900" y="391" width="4" height="4" fill="#fff" stroke="#e0141e" stroke-width="1.3"/><rect x="1894" y="403" width="10" height="8" fill="#eef" stroke="#1f3556" stroke-width="1.2"/><circle cx="1906" cy="411" r="4" fill="#eef" stroke="#1f3556" stroke-width="1.2"/><rect x="1893" y="408" width="4" height="4" fill="#fff" stroke="#e0141e" stroke-width="1.3"/><rect x="1900" y="428" width="4" height="4" fill="#fff" stroke="#e0141e" stroke-width="1.3"/><path d="M1894 446 L1910 462" stroke="#1f3556" stroke-width="1.2"/><rect x="1900" y="452" width="4" height="4" fill="#fff" stroke="#e0141e" stroke-width="1.3"/><path d="M1893 470 L1906 483 M1897 466 L1910 479" stroke="#1f3556" stroke-width="1.2"/><rect x="1896" y="473" width="4" height="4" fill="#fff" stroke="#e0141e" stroke-width="1.3"/><path d="M1893 490 H1911" stroke="#f2f2f2" stroke-width="1"/><path d="M1894 498 L1910 510 M1910 498 L1894 510 M1894 497 Q1902 504 1910 497" fill="none" stroke="#1f3556" stroke-width="1.2"/><rect x="1900" y="502" width="4" height="4" fill="#fff" stroke="#e0141e" stroke-width="1.3"/><path d="M1894 534 L1901 518 L1908 534" fill="none" stroke="#1f3556" stroke-width="1.2"/><path d="M1893 524 Q1902 530 1911 524" fill="none" stroke="#1f3556" stroke-width="1"/><rect x="1904" y="525" width="4" height="4" fill="#fff" stroke="#e0141e" stroke-width="1.3"/><path d="M1893 541 H1911" stroke="#f2f2f2" stroke-width="1"/><path d="M1898 551 a2 2 0 1 1 4 0 a2 2 0 1 1 -4 0 M1899 554 L1903 560 L1908 562 M1901 557 L1896 561 M1903 560 L1899 567" fill="none" stroke="#555" stroke-width="2.2"/><path d="M1895 572 L1909 586 M1909 572 L1895 586" stroke="#e0141e" stroke-width="3.5"/></svg>
<div id="ltabs" class="a"></div>
<div id="cmd" class="a"></div>
<div id="status" class="a"></div>
<svg class="a" style="left:391px;top:975px;z-index:2" width="1495" height="18" viewBox="391 975 1495 18"><rect x="391" y="975" width="1495" height="16" fill="#f0f0f0"/><rect x="391" y="975" width="64" height="16" fill="#d9d9d9"/><path d="M406.5 976V990M422.5 976V990M438.5 976V990M454.5 976V990" stroke="#f4f4f4" stroke-width="1"/><path d="M405.5 976V990M421.5 976V990M437.5 976V990M453.5 976V990" stroke="#b8b8b8" stroke-width="1"/><path d="M395.5 978V988" stroke="#111" stroke-width="1.5"/><path d="M403 978L397 983L403 988Z" fill="#111"/><path d="M418 978L412 983L418 988Z" fill="#111"/><path d="M429 978L435 983L429 988Z" fill="#111"/><path d="M444 978L450 983L444 988Z" fill="#111"/><path d="M451.5 978V988" stroke="#111" stroke-width="1.5"/><path d="M456 976L463 990H503L509 976Z" fill="#fff"/><path d="M456 976L463 990M503 990L509 976L511 990H561L565 976L570 990H620L627 976" fill="none" stroke="#222" stroke-width="1"/></svg>
<div class="t" style="z-index:3;left:466px;top:977px;font-size:12px;font-weight:bold;color:#111;letter-spacing:-0.3px">Model</div>
<div class="t" style="z-index:3;left:517px;top:977px;font-size:12px;color:#111;letter-spacing:-0.3px">Layout1</div>
<div class="t" style="z-index:3;left:576px;top:977px;font-size:12px;color:#111;letter-spacing:-0.3px">Layout2</div>
<div class="a" style="left:33px;top:991px;width:1853px;height:6px;background:#4e4e4e"></div>
<div class="a" style="left:33px;top:996px;width:19px;height:56px;background:#a3a3a3;border-radius:3px 0 0 0"></div>
<svg class="a" style="left:36px;top:998px" width="14" height="40"><path d="M3 5 L11 13 M11 5 L3 13" stroke="#444" stroke-width="1.2"/><path d="M4 23 H10 M5 23 V28 H9 V23 M4 28 H10 M7 28 V32" fill="none" stroke="#555" stroke-width="1.2"/></svg>
<div class="a" style="left:52px;top:996px;width:2px;height:56px;background:#ddd"></div>
<div class="t" style="left:55px;top:998px;font-family:'Liberation Mono',monospace;font-size:13.33px;color:#111;line-height:14px">First line of annotation text/&lt;options&gt;: Review Gearbox<br>Next line of annotation text:</div>
<div class="a" style="left:54px;top:1029px;width:1832px;height:1px;background:#8a8a8a"></div>
<div class="a" style="left:54px;top:1030px;width:1px;height:22px;background:#8a8a8a"></div>
<div class="t" style="left:58px;top:1034px;font-family:'Liberation Mono',monospace;font-size:11.5px;color:#000;top:1035px;-webkit-text-stroke:0.25px #000">Command:</div>
<div class="a" style="left:1870px;top:997px;width:15px;height:32px;background:#f0f0f0"></div>
<svg class="a" style="left:1871px;top:1000px" width="12" height="26"><path d="M2 8 L6 4 L10 8 M2 18 L6 22 L10 18" fill="none" stroke="#333" stroke-width="1.3"/></svg>
<svg class="a" style="left:1330px;top:1052px" width="590" height="22" viewBox="1330 1052 590 22"><path d="M1337 1054 V1072" stroke="#222" stroke-width="1"/><path d="M1338 1054 V1072" stroke="#555" stroke-width="0.6"/><path d="M1358 1054 V1072" stroke="#222" stroke-width="1"/><path d="M1359 1054 V1072" stroke="#555" stroke-width="0.6"/><path d="M1470 1054 V1072" stroke="#222" stroke-width="1"/><path d="M1471 1054 V1072" stroke="#555" stroke-width="0.6"/><path d="M1528 1054 V1072" stroke="#222" stroke-width="1"/><path d="M1529 1054 V1072" stroke="#555" stroke-width="0.6"/><path d="M1574 1054 V1072" stroke="#222" stroke-width="1"/><path d="M1575 1054 V1072" stroke="#555" stroke-width="0.6"/><path d="M1596 1054 V1072" stroke="#222" stroke-width="1"/><path d="M1597 1054 V1072" stroke="#555" stroke-width="0.6"/><path d="M1616 1054 V1072" stroke="#222" stroke-width="1"/><path d="M1617 1054 V1072" stroke="#555" stroke-width="0.6"/><path d="M1634 1054 V1072" stroke="#222" stroke-width="1"/><path d="M1635 1054 V1072" stroke="#555" stroke-width="0.6"/><path d="M1653 1054 V1072" stroke="#222" stroke-width="1"/><path d="M1654 1054 V1072" stroke="#555" stroke-width="0.6"/><path d="M1673 1054 V1072" stroke="#222" stroke-width="1"/><path d="M1674 1054 V1072" stroke="#555" stroke-width="0.6"/><path d="M1695 1054 V1072" stroke="#222" stroke-width="1"/><path d="M1696 1054 V1072" stroke="#555" stroke-width="0.6"/><path d="M1716 1054 V1072" stroke="#222" stroke-width="1"/><path d="M1717 1054 V1072" stroke="#555" stroke-width="0.6"/><path d="M1742 1054 V1072" stroke="#222" stroke-width="1"/><path d="M1743 1054 V1072" stroke="#555" stroke-width="0.6"/><path d="M1766 1054 V1072" stroke="#222" stroke-width="1"/><path d="M1767 1054 V1072" stroke="#555" stroke-width="0.6"/><path d="M1810 1054 V1072" stroke="#222" stroke-width="1"/><path d="M1811 1054 V1072" stroke="#555" stroke-width="0.6"/><path d="M1850 1054 V1072" stroke="#222" stroke-width="1"/><path d="M1851 1054 V1072" stroke="#555" stroke-width="0.6"/><path d="M1876 1054 V1072" stroke="#222" stroke-width="1"/><path d="M1877 1054 V1072" stroke="#555" stroke-width="0.6"/><path d="M1898 1054 V1072" stroke="#222" stroke-width="1"/><path d="M1899 1054 V1072" stroke="#555" stroke-width="0.6"/><path d="M1539 1058 L1539 1064 L1533 1069 M1539 1064 L1545 1069" stroke="#fff" stroke-width="2" fill="none"/><rect x="1573" y="1055" width="20" height="17" fill="#6a6f77"/><path d="M1576 1068 L1582 1060 L1586 1068" stroke="#fff" stroke-width="1.5" fill="none"/><circle cx="1587" cy="1063" r="4" fill="#f3e48a"/><path d="M1597 1068 L1602 1060 L1606 1068" stroke="#fff" stroke-width="1.5" fill="none"/><path d="M1607 1057 L1604 1063 L1608 1062 L1605 1068" stroke="#f0b030" stroke-width="1.3" fill="none"/><rect x="1617" y="1055" width="14" height="15" fill="none" stroke="#999" stroke-width="1"/><path d="M1621 1055 V1070 M1624 1055 V1070 M1627 1055 V1070 M1617 1059 H1631 M1617 1062 H1631 M1617 1066 H1631" stroke="#999" stroke-width="0.8"/><path d="M1617 1063 H1631" stroke="#e02020" stroke-width="1.2"/><path d="M1624 1057 V1071" stroke="#20c040" stroke-width="1"/><rect x="1636" y="1055" width="15" height="15" fill="#777" stroke="#999" stroke-width="1"/><path d="M1640 1055 V1070 M1643 1055 V1070 M1646 1055 V1070 M1636 1059 H1651 M1636 1062 H1651 M1636 1066 H1651" stroke="#aaa" stroke-width="0.8"/><path d="M1663 1058 V1070 H1676" stroke="#20c040" stroke-width="1.3" fill="none"/><path d="M1664 1070 H1678 M1668 1064 H1672 V1070" stroke="#e02020" stroke-width="1.3" fill="none"/><circle cx="1690" cy="1063" r="7" fill="none" stroke="#bbb" stroke-width="1.5"/><path d="M1690 1063 L1696 1057" stroke="#e02020" stroke-width="1.3"/><rect x="1698" y="1055" width="17" height="16" fill="#6a6f77"/><path d="M1706 1055 V1071 M1698 1063 H1715" stroke="#ddd" stroke-width="1.3"/><rect x="1704" y="1061" width="4" height="4" fill="none" stroke="#e02020"/><rect x="1722" y="1055" width="18" height="16" fill="#6a6f77"/><path d="M1724 1069 L1738 1056 M1724 1069 H1738" stroke="#ddd" stroke-width="1.2"/><path d="M1754 1056 V1070 M1747 1063 H1761" stroke="#fff" stroke-width="2"/><circle cx="1863" cy="1063" r="6" fill="#3a8ae0"/><circle cx="1863" cy="1063" r="2.5" fill="#333"/><path d="M1863 1055 V1071 M1855 1063 H1871 M1857 1057 L1869 1069 M1869 1057 L1857 1069" stroke="#3a8ae0" stroke-width="2.5"/><circle cx="1863" cy="1063" r="2.5" fill="#333"/><rect x="1878" y="1057" width="10" height="7" fill="#fff" stroke="#222"/><rect x="1883" y="1062" width="10" height="7" fill="#fff" stroke="#222"/><rect x="1902" y="1057" width="14" height="11" fill="#f0c040"/><path d="M1902 1057 L1909 1063 L1916 1057" stroke="#b08020" fill="none"/></svg>
<div class="t" style="left:8px;top:1058px;font-size:12px;color:#f2f2f2;letter-spacing:-0.2px">Ready</div>
<div class="t" style="left:1344px;top:1058px;font-size:12px;color:#f2f2f2;letter-spacing:-0.45px">5621.6363,1003.5352,0</div>
<div class="t" style="left:1482px;top:1058px;font-size:12px;color:#f2f2f2;letter-spacing:-0.2px">OpenGL</div>
<div class="t" style="left:1552px;top:1058px;font-size:12px;color:#f2f2f2">1:1</div>
<div class="t" style="left:1769px;top:1058px;font-size:12px;color:#f2f2f2;letter-spacing:-0.4px">MODEL</div>
<div class="t" style="left:1812px;top:1058px;font-size:12px;color:#8a8f96;letter-spacing:-0.4px">TABLET</div>
</body></html>
